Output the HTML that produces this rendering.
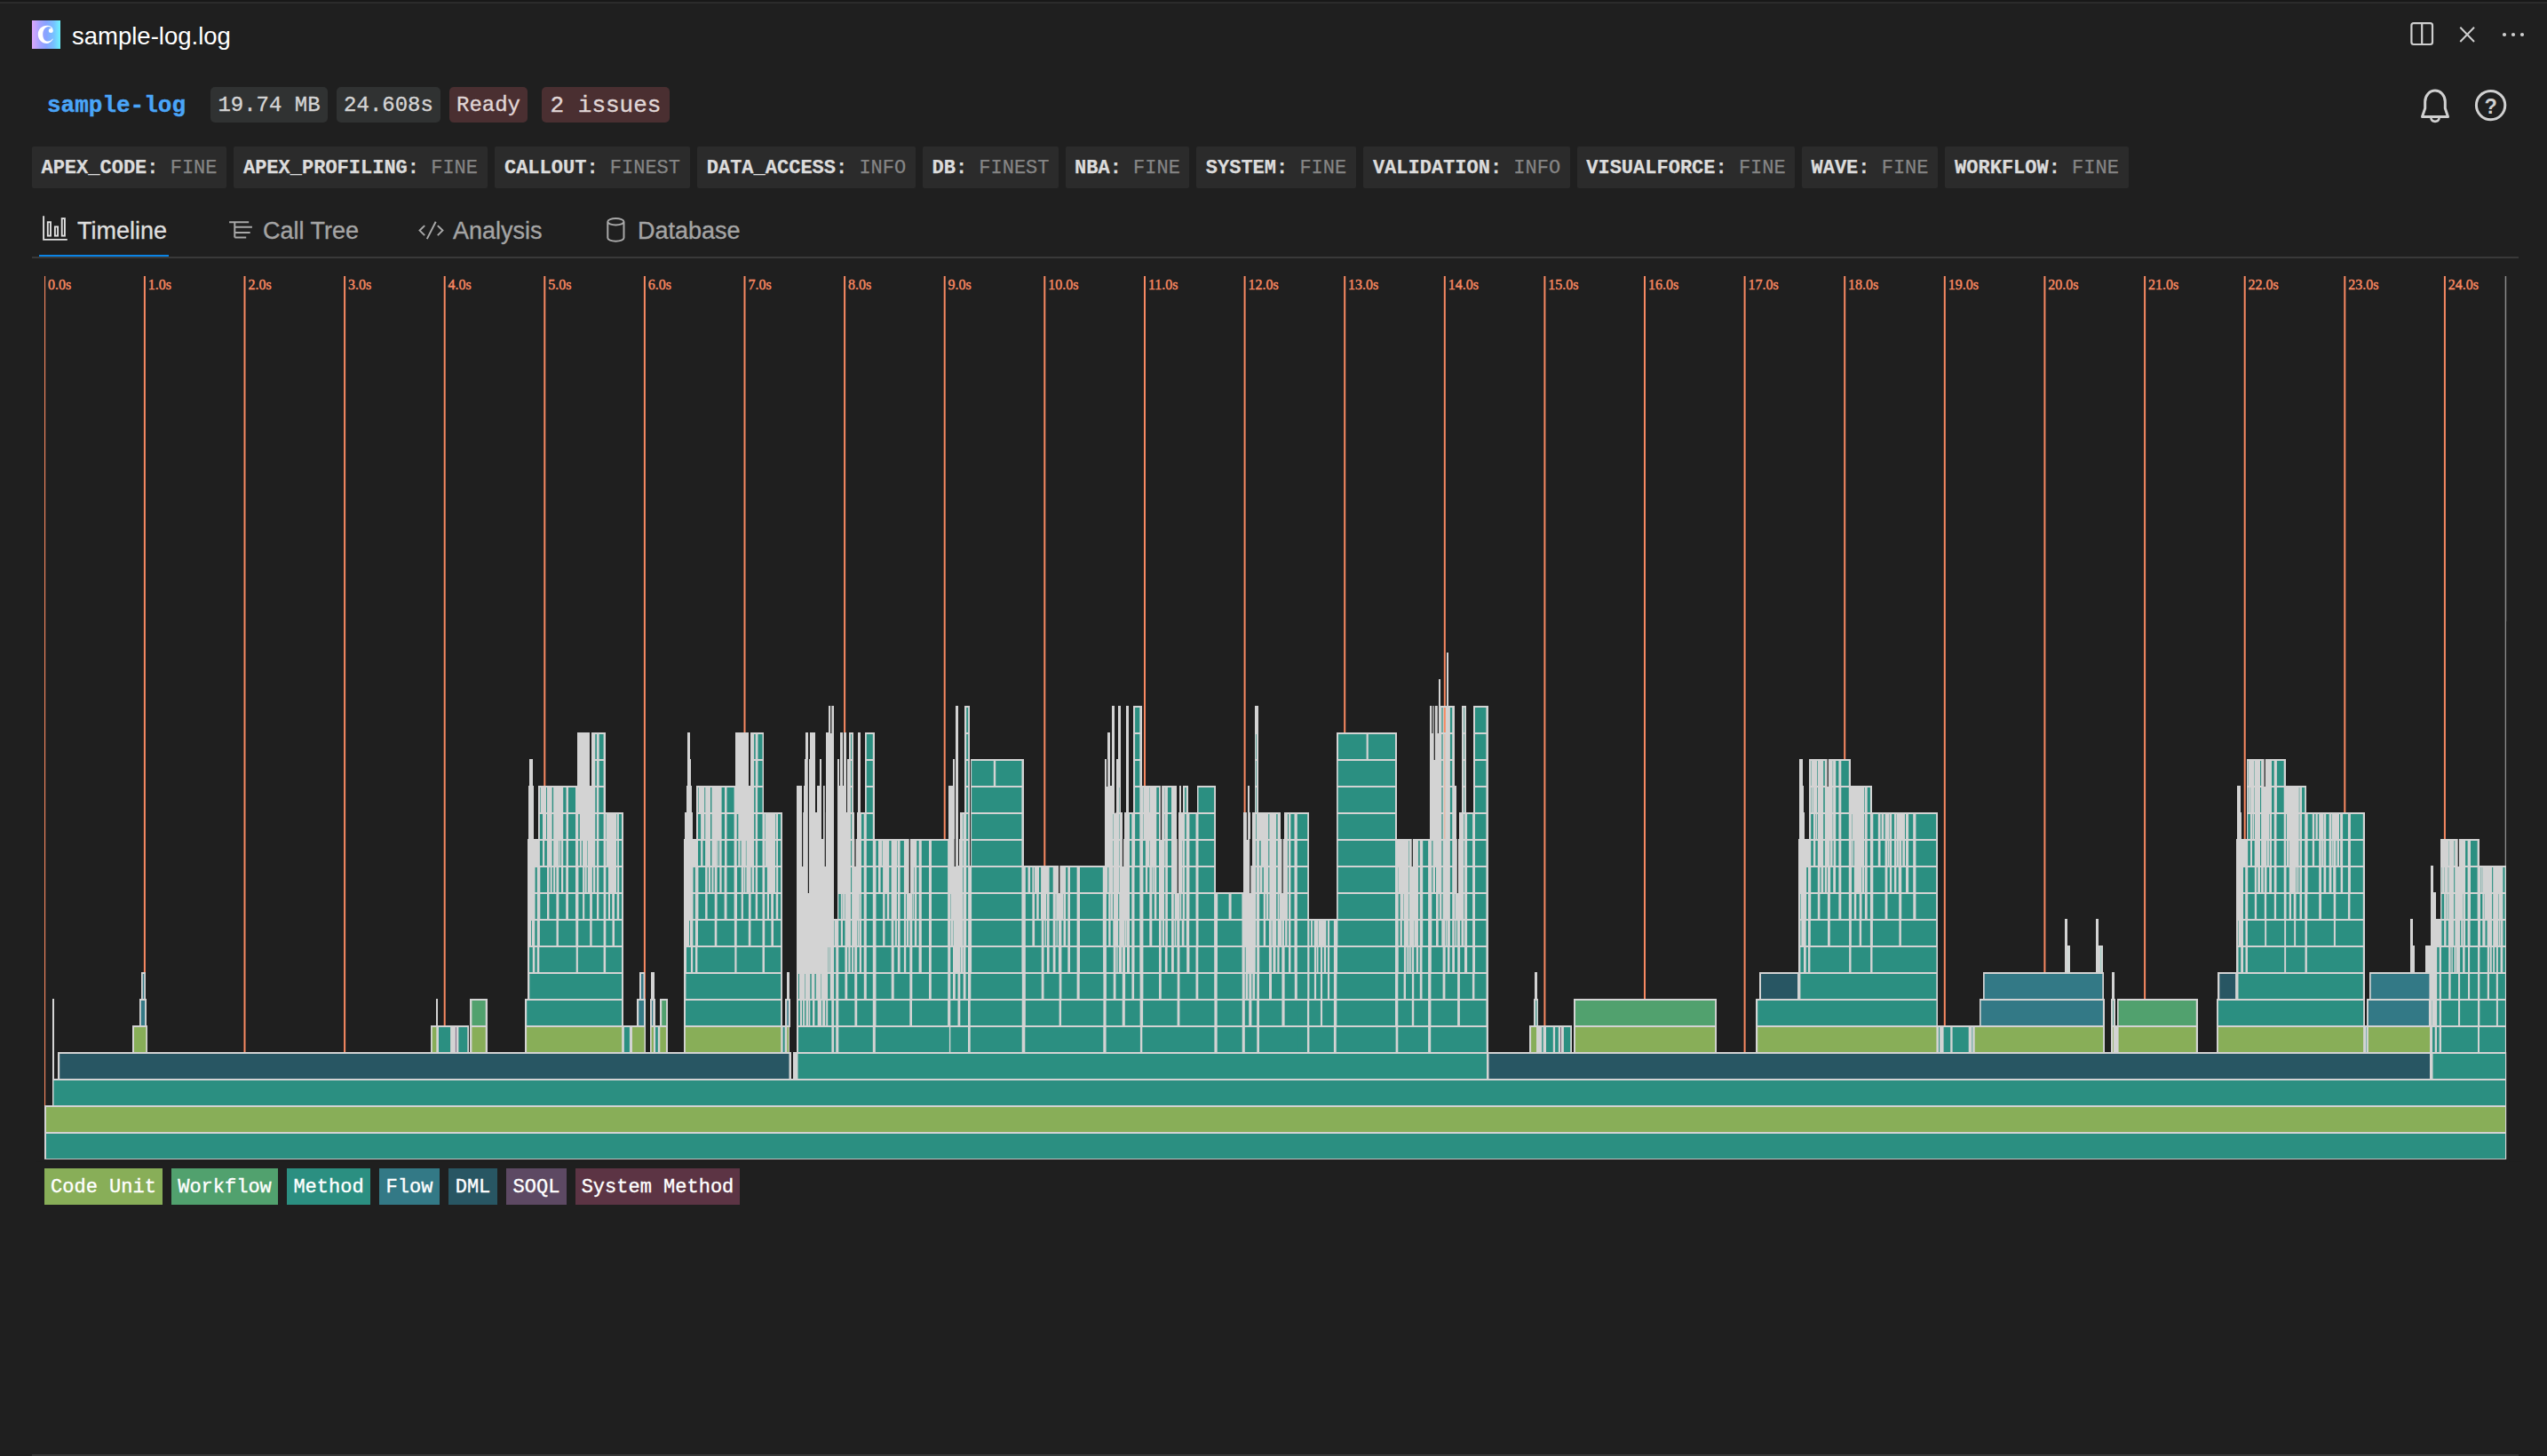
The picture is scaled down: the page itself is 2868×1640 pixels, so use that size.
<!DOCTYPE html>
<html><head><meta charset="utf-8"><title>sample-log.log</title>
<style>
*{box-sizing:border-box;margin:0;padding:0}
html,body{width:2868px;height:1640px;overflow:hidden;background:#1f1f1f}
body{position:relative;font-family:"Liberation Sans",sans-serif;color:#ccc}
.abs{position:absolute}
.mono{font-family:"Liberation Mono",monospace}
.topstrip{left:0;top:0;width:2868px;height:2px;background:#181818}
.topline{left:0;top:2px;width:2868px;height:2px;background:#2b2b2b}
.title{left:81px;top:22.5px;font-size:27.5px;line-height:36px;color:#fff;white-space:nowrap}
.logo{left:36px;top:23px;width:32px;height:32px;background:linear-gradient(90deg,#dca6fb 0%,#a9a2fe 25%,#86a2ff 50%,#76c4ff 78%,#6ef4ff 100%)}
.name{left:53px;top:101px;-webkit-text-stroke:0.4px;font-size:26px;line-height:36px;font-weight:bold;color:#4aa5f8;white-space:nowrap}
.badge{top:98px;height:40px;border-radius:5px;background:#303232;color:#d4d4d4;font-size:24px;line-height:42.500px;-webkit-text-stroke:0.35px;text-align:center;white-space:nowrap}
.badge.red{background:#4a2f31;color:#e0d6d6}
.chip{top:165px;height:47px;background:#2b2b2b;border-radius:2px;font-size:22px;line-height:49px;white-space:nowrap;text-align:center;color:#858585;-webkit-text-stroke:0.25px}
.chip b{color:#dcdcdc;font-weight:bold}
.tab{top:243.800px;-webkit-text-stroke:0.35px;font-size:27px;line-height:32px;color:#a4a4a4;white-space:nowrap}
.tab.on{color:#dedede}
.uline{left:44px;top:287px;width:146px;height:2px;background:#0a84e6}
.sep{left:36px;top:289px;width:2800px;height:2px;background:#393939}
.bot{left:36px;top:1638px;width:2800px;height:2px;background:#353535}
.leg{top:1316px;height:41px;font-size:22px;line-height:43px;color:#fff;text-align:center;white-space:nowrap;-webkit-text-stroke:0.35px}
svg{position:absolute;left:0;top:0}
</style></head><body>
<div class="abs topstrip"></div><div class="abs topline"></div>
<div class="abs logo"></div>
<svg width="2868" height="160" viewBox="0 0 2868 160">
<path d="M59.8 44.1C57.5 47.8 55 49 52.7 49C47 49 42.8 44.5 42.8 38.7C42.8 33 47 28.8 53 28.8C56 28.8 58.6 30.2 59.6 32.6L58.5 33C57.6 31 56.4 29.9 54.6 29.9C51 29.9 48.2 33.5 48.2 38.7C48.2 43.5 50.5 46.6 54 46.6C56 46.6 58 45.5 59.3 43.600Z" fill="#fff"/><circle cx="57.3" cy="34.6" r="2.5" fill="#fff"/>
<g fill="none" stroke="#cfcfcf" stroke-width="2.2">
<rect x="2715.4" y="26.2" width="23.6" height="23.8" rx="2.5"/><path d="M2727.2 26.2V50"/>
<path d="M2770.3 30.8L2786 47M2786 30.8L2770.3 47" stroke-width="2"/>
</g>
<g fill="#cfcfcf"><circle cx="2820" cy="39" r="2.1"/><circle cx="2830" cy="39" r="2.1"/><circle cx="2840" cy="39" r="2.1"/></g>
<g fill="none" stroke="#d0d0d0" stroke-width="3" stroke-linejoin="round">
<path d="M2727.5 131.5h29l-3.2-9.5v-7.5a11.3 12.5 0 0 0-22.6 0v7.500z"/>
<path d="M2737.3 133a4.8 4.8 0 0 0 9.4 0" stroke-width="2.6"/>
<circle cx="2804.6" cy="118.6" r="16.2"/>
</g>
<text x="2804.6" y="127.5" font-family="Liberation Sans" font-weight="bold" font-size="23.500" fill="#d0d0d0" text-anchor="middle">?</text>
</svg>
<div class="abs title">sample-log.log</div>
<div class="abs name mono">sample-log</div>
<div class="abs badge mono" style="left:237px;width:132px">19.74 MB</div>
<div class="abs badge mono" style="left:379px;width:117px">24.608s</div>
<div class="abs badge red mono" style="left:506px;width:88px">Ready</div>
<div class="abs badge red mono" style="left:610px;width:144px;font-size:26px;line-height:42px">2 issues</div>
<div class="abs chip mono" style="left:36px;width:219px"><b>APEX_CODE:</b> FINE</div>
<div class="abs chip mono" style="left:263px;width:286px"><b>APEX_PROFILING:</b> FINE</div>
<div class="abs chip mono" style="left:557px;width:220px"><b>CALLOUT:</b> FINEST</div>
<div class="abs chip mono" style="left:785px;width:246px"><b>DATA_ACCESS:</b> INFO</div>
<div class="abs chip mono" style="left:1039px;width:153px"><b>DB:</b> FINEST</div>
<div class="abs chip mono" style="left:1200px;width:139px"><b>NBA:</b> FINE</div>
<div class="abs chip mono" style="left:1347px;width:180px"><b>SYSTEM:</b> FINE</div>
<div class="abs chip mono" style="left:1535px;width:233px"><b>VALIDATION:</b> INFO</div>
<div class="abs chip mono" style="left:1776px;width:245px"><b>VISUALFORCE:</b> FINE</div>
<div class="abs chip mono" style="left:2029px;width:153px"><b>WAVE:</b> FINE</div>
<div class="abs chip mono" style="left:2190px;width:207px"><b>WORKFLOW:</b> FINE</div>
<div class="abs tab on" style="left:87px">Timeline</div>
<div class="abs tab" style="left:296px">Call Tree</div>
<div class="abs tab" style="left:510px">Analysis</div>
<div class="abs tab" style="left:718px">Database</div>
<svg width="800" height="300" viewBox="0 0 800 300">
<g fill="none" stroke="#e0e0e0" stroke-width="1.9">
<path d="M49.1 243.2V269.9H75.800"/>
<rect x="53.8" y="250.2" width="3.2" height="15.4"/><rect x="61.9" y="255.4" width="3.2" height="10.2"/><rect x="69.7" y="246.1" width="3.2" height="19.500"/>
</g>
<g fill="none" stroke="#a8a8a8" stroke-width="2">
<path d="M258.1 250.3H280.2M264.3 255.7H283.9M264.3 261.9H281.7M264.3 267.6H277.2M264.3 250.3V267.600"/>
<path d="M478.2 254.1L472.600 259.6L478.2 265.1M492.8 254.1L498.400 259.6L492.8 265.1M490.7 249.8L480.8 269.100"/>
<path d="M684.3 249.7V268a9.1 3.7 0 0 0 18.2 0V249.7a9.1 3.7 0 0 0 -18.2 0a9.1 3.7 0 0 0 18.2 0"/>
</g>
</svg>
<div class="abs uline"></div><div class="abs sep"></div><div class="abs bot"></div>
<svg width="2868" height="1640" viewBox="0 0 2868 1640">
<g fill="#f88962">
<rect x="50" y="311" width="1.100" height="995"/>
<rect x="161.9" y="311" width="2" height="995"/>
<rect x="274.5" y="311" width="2" height="995"/>
<rect x="387.1" y="311" width="2" height="995"/>
<rect x="499.7" y="311" width="2" height="995"/>
<rect x="612.3" y="311" width="2" height="995"/>
<rect x="724.9" y="311" width="2" height="995"/>
<rect x="837.5" y="311" width="2" height="995"/>
<rect x="950.1" y="311" width="2" height="995"/>
<rect x="1062.7" y="311" width="2" height="995"/>
<rect x="1175.3" y="311" width="2" height="995"/>
<rect x="1288" y="311" width="2" height="995"/>
<rect x="1400.6" y="311" width="2" height="995"/>
<rect x="1513.2" y="311" width="2" height="995"/>
<rect x="1625.8" y="311" width="2" height="995"/>
<rect x="1738.4" y="311" width="2" height="995"/>
<rect x="1851" y="311" width="2" height="995"/>
<rect x="1963.6" y="311" width="2" height="995"/>
<rect x="2076.2" y="311" width="2" height="995"/>
<rect x="2188.8" y="311" width="2" height="995"/>
<rect x="2301.4" y="311" width="2" height="995"/>
<rect x="2414.1" y="311" width="2" height="995"/>
<rect x="2526.7" y="311" width="2" height="995"/>
<rect x="2639.3" y="311" width="2" height="995"/>
<rect x="2751.9" y="311" width="2" height="995"/>
</g>
<g font-family="Liberation Serif" font-size="16" fill="#f88962" stroke="#f88962" stroke-width="0.45">
<text x="54.1" y="325.5">0.0s</text>
<text x="166.8" y="325.5">1.0s</text>
<text x="279.4" y="325.5">2.0s</text>
<text x="392" y="325.5">3.0s</text>
<text x="504.6" y="325.5">4.0s</text>
<text x="617.2" y="325.5">5.0s</text>
<text x="729.8" y="325.5">6.0s</text>
<text x="842.4" y="325.5">7.0s</text>
<text x="955" y="325.5">8.0s</text>
<text x="1067.6" y="325.5">9.0s</text>
<text x="1180.2" y="325.5">10.0s</text>
<text x="1292.9" y="325.5">11.0s</text>
<text x="1405.5" y="325.5">12.0s</text>
<text x="1518.1" y="325.5">13.0s</text>
<text x="1630.7" y="325.5">14.0s</text>
<text x="1743.3" y="325.5">15.0s</text>
<text x="1855.9" y="325.5">16.0s</text>
<text x="1968.5" y="325.5">17.0s</text>
<text x="2081.1" y="325.5">18.0s</text>
<text x="2193.7" y="325.5">19.0s</text>
<text x="2306.3" y="325.5">20.0s</text>
<text x="2419" y="325.5">21.0s</text>
<text x="2531.6" y="325.5">22.0s</text>
<text x="2644.2" y="325.5">23.0s</text>
<text x="2756.8" y="325.5">24.0s</text>
</g>
<rect x="2820.7" y="311" width="1.5" height="995" fill="#8a8a8a"/>
<g fill="#d3d3d3" shape-rendering="crispEdges">
<rect x="50" y="1275" width="2773" height="32"/>
<rect x="50" y="1245" width="2773" height="32"/>
<rect x="58.5" y="1215" width="2764.5" height="32"/>
<rect x="58.5" y="1125" width="2.5" height="92"/>
<rect x="65.2" y="1185" width="825.3" height="32"/>
<rect x="149" y="1155" width="17.3" height="32"/>
<rect x="156.8" y="1125" width="8.3" height="32"/>
<rect x="158.9" y="1095" width="5.2" height="32"/>
<rect x="485" y="1155" width="43.3" height="32"/>
<rect x="490.6" y="1125" width="2.8" height="32"/>
<rect x="529.4" y="1155" width="19.3" height="32"/>
<rect x="529.4" y="1125" width="19.3" height="32"/>
<rect x="591.1" y="1155" width="111" height="32"/>
<rect x="591.1" y="1125" width="111" height="32"/>
<rect x="594.3" y="945" width="107.8" height="182"/>
<rect x="605.8" y="915" width="96.3" height="32"/>
<rect x="605.8" y="885" width="75.7" height="32"/>
<rect x="649.7" y="825" width="14.2" height="62"/>
<rect x="665.8" y="825" width="15.7" height="62"/>
<rect x="663.9" y="885" width="1.9" height="32"/>
<rect x="594.9" y="885" width="6.2" height="62"/>
<rect x="596.1" y="855" width="3.7" height="32"/>
<rect x="769.9" y="1155" width="111.3" height="32"/>
<rect x="769.9" y="1125" width="111.3" height="32"/>
<rect x="770.4" y="945" width="110.8" height="182"/>
<rect x="783.9" y="915" width="97.3" height="32"/>
<rect x="783.9" y="885" width="76.5" height="32"/>
<rect x="828.2" y="825" width="14.4" height="62"/>
<rect x="844.5" y="825" width="15.9" height="62"/>
<rect x="842.6" y="885" width="1.9" height="32"/>
<rect x="772.9" y="885" width="6.2" height="62"/>
<rect x="774.1" y="855" width="3.7" height="32"/>
<rect x="770.5" y="945" width="10.5" height="152"/>
<rect x="701.8" y="1155" width="25.3" height="32"/>
<rect x="732" y="1155" width="19.5" height="32"/>
<rect x="717.3" y="1125" width="9.6" height="32"/>
<rect x="720.2" y="1095" width="6.1" height="32"/>
<rect x="731.9" y="1125" width="6.4" height="32"/>
<rect x="733.2" y="1095" width="3.7" height="32"/>
<rect x="743.1" y="1125" width="8.7" height="32"/>
<rect x="774.2" y="825" width="2.5" height="32"/>
<rect x="770.5" y="915" width="9.6" height="32"/>
<rect x="892.9" y="1185" width="6.1" height="32"/>
<rect x="880.1" y="1155" width="9.3" height="32"/>
<rect x="884" y="1125" width="5.9" height="32"/>
<rect x="885.7" y="1095" width="3.7" height="32"/>
<rect x="896.5" y="1185" width="779.5" height="32"/>
<rect x="896.8" y="945" width="41.9" height="242"/>
<rect x="896.8" y="915" width="28.3" height="272"/>
<rect x="927" y="915" width="11.6" height="272"/>
<rect x="897.1" y="885" width="6.2" height="302"/>
<rect x="905.1" y="885" width="1.1" height="302"/>
<rect x="906.2" y="855" width="3.5" height="332"/>
<rect x="907.1" y="825" width="2.6" height="362"/>
<rect x="911.2" y="855" width="0.8" height="332"/>
<rect x="911.9" y="825" width="5.6" height="362"/>
<rect x="920.2" y="885" width="2.3" height="302"/>
<rect x="922.5" y="855" width="2.6" height="332"/>
<rect x="927" y="885" width="2" height="302"/>
<rect x="930" y="825" width="8.6" height="362"/>
<rect x="933.1" y="795" width="5.6" height="392"/>
<rect x="938.8" y="1035" width="4.1" height="152"/>
<rect x="942.6" y="945" width="42.3" height="242"/>
<rect x="942.6" y="915" width="19.6" height="272"/>
<rect x="964.8" y="915" width="20.1" height="272"/>
<rect x="942.6" y="885" width="10.6" height="302"/>
<rect x="954.2" y="885" width="6.8" height="302"/>
<rect x="942.6" y="855" width="2.6" height="332"/>
<rect x="946.2" y="825" width="2.4" height="362"/>
<rect x="949.8" y="825" width="3.3" height="362"/>
<rect x="954.2" y="855" width="1.8" height="332"/>
<rect x="956" y="825" width="5" height="362"/>
<rect x="965.6" y="825" width="3.8" height="362"/>
<rect x="974.3" y="825" width="10.6" height="362"/>
<rect x="984.7" y="945" width="83.3" height="242"/>
<rect x="1067.6" y="975" width="25.4" height="212"/>
<rect x="1086.1" y="795" width="5.8" height="392"/>
<rect x="1092.5" y="855" width="60.1" height="332"/>
<rect x="1152.1" y="975" width="77.9" height="212"/>
<rect x="1067.8" y="945" width="10.9" height="242"/>
<rect x="1068.4" y="885" width="6.5" height="302"/>
<rect x="1072.7" y="855" width="2.3" height="332"/>
<rect x="1076" y="795" width="2.7" height="392"/>
<rect x="1080.2" y="945" width="6" height="242"/>
<rect x="1081" y="915" width="5.3" height="272"/>
<rect x="1227" y="975" width="17.9" height="212"/>
<rect x="1244.1" y="885" width="8.2" height="302"/>
<rect x="1244.1" y="855" width="2.1" height="332"/>
<rect x="1247.3" y="825" width="2.3" height="362"/>
<rect x="1251.7" y="795" width="3.4" height="392"/>
<rect x="1256.9" y="855" width="1.6" height="332"/>
<rect x="1258.6" y="795" width="3.4" height="392"/>
<rect x="1252.4" y="915" width="12" height="272"/>
<rect x="1264.1" y="945" width="2.5" height="242"/>
<rect x="1266.1" y="915" width="9.6" height="272"/>
<rect x="1267.9" y="795" width="3.3" height="392"/>
<rect x="1275.7" y="795" width="9.9" height="392"/>
<rect x="1285.4" y="885" width="39.7" height="302"/>
<rect x="1324.8" y="945" width="2.7" height="242"/>
<rect x="1327.3" y="915" width="20.6" height="272"/>
<rect x="1328" y="885" width="2.3" height="302"/>
<rect x="1332.1" y="885" width="5.9" height="302"/>
<rect x="1347.6" y="885" width="21.8" height="302"/>
<rect x="1369.2" y="1005" width="30.9" height="182"/>
<rect x="1399.8" y="915" width="7.8" height="272"/>
<rect x="1404.9" y="885" width="2.3" height="302"/>
<rect x="1407.4" y="975" width="2.6" height="212"/>
<rect x="1409.7" y="915" width="32.6" height="272"/>
<rect x="1412.7" y="795" width="4.5" height="392"/>
<rect x="1442" y="945" width="3.7" height="242"/>
<rect x="1445.5" y="915" width="28.3" height="272"/>
<rect x="1473.5" y="1035" width="26.5" height="152"/>
<rect x="1473.1" y="1035" width="32.3" height="152"/>
<rect x="1504.8" y="825" width="68.4" height="362"/>
<rect x="1571" y="945" width="39.7" height="242"/>
<rect x="1610.2" y="795" width="27.3" height="392"/>
<rect x="1620.1" y="765" width="2.1" height="422"/>
<rect x="1628.8" y="735" width="2.3" height="452"/>
<rect x="1637" y="885" width="3.3" height="302"/>
<rect x="1640" y="945" width="3" height="242"/>
<rect x="1642.8" y="915" width="16.8" height="272"/>
<rect x="1646.2" y="795" width="4.8" height="392"/>
<rect x="1659" y="795" width="16.6" height="392"/>
<rect x="1722.2" y="1155" width="48.1" height="32"/>
<rect x="1727.3" y="1125" width="4.8" height="32"/>
<rect x="1728" y="1095" width="3" height="32"/>
<rect x="1674.5" y="1185" width="1063.5" height="32"/>
<rect x="2737.5" y="1185" width="85.5" height="32"/>
<rect x="1772" y="1155" width="161.1" height="32"/>
<rect x="1772" y="1125" width="161.1" height="32"/>
<rect x="1977.2" y="1155" width="205.2" height="32"/>
<rect x="1977.2" y="1125" width="205.2" height="32"/>
<rect x="1981" y="1095" width="45" height="32"/>
<rect x="2025.2" y="945" width="157.2" height="182"/>
<rect x="2026" y="855" width="3.8" height="272"/>
<rect x="2026" y="885" width="4.7" height="242"/>
<rect x="2026" y="915" width="6" height="212"/>
<rect x="2037" y="855" width="47.4" height="272"/>
<rect x="2084.1" y="885" width="24" height="242"/>
<rect x="2107.9" y="915" width="74.5" height="212"/>
<rect x="2182.1" y="1155" width="41.8" height="32"/>
<rect x="2221.7" y="1155" width="148.4" height="32"/>
<rect x="2228.6" y="1125" width="141.3" height="32"/>
<rect x="2232.7" y="1095" width="136.6" height="32"/>
<rect x="2324.8" y="1065" width="6.2" height="32"/>
<rect x="2324.8" y="1035" width="3.4" height="32"/>
<rect x="2359.8" y="1065" width="8.1" height="32"/>
<rect x="2359.8" y="1035" width="3.3" height="32"/>
<rect x="2377.7" y="1095" width="3.4" height="32"/>
<rect x="2377.3" y="1125" width="4.8" height="32"/>
<rect x="2377.3" y="1155" width="6.9" height="32"/>
<rect x="2383.6" y="1155" width="91.2" height="32"/>
<rect x="2383.6" y="1125" width="91.2" height="32"/>
<rect x="2495.9" y="1155" width="167.2" height="32"/>
<rect x="2495.9" y="1125" width="167.2" height="32"/>
<rect x="2497.3" y="1095" width="21.8" height="32"/>
<rect x="2518.3" y="945" width="144.8" height="182"/>
<rect x="2519.1" y="885" width="3.4" height="242"/>
<rect x="2519.1" y="915" width="4.9" height="212"/>
<rect x="2529.6" y="855" width="44.2" height="272"/>
<rect x="2573.6" y="885" width="23.6" height="242"/>
<rect x="2596.9" y="915" width="66.2" height="212"/>
<rect x="2662.9" y="1155" width="4.4" height="32"/>
<rect x="2664.9" y="1155" width="73.1" height="32"/>
<rect x="2664.9" y="1125" width="72" height="32"/>
<rect x="2667.7" y="1095" width="69.7" height="32"/>
<rect x="2714.3" y="1035" width="2.5" height="32"/>
<rect x="2714.3" y="1065" width="4.9" height="32"/>
<rect x="2731.2" y="1065" width="6.2" height="122"/>
<rect x="2737.1" y="1035" width="85.1" height="152"/>
<rect x="2737.1" y="975" width="3.3" height="212"/>
<rect x="2737.1" y="1005" width="5.5" height="182"/>
<rect x="2748.1" y="945" width="44.2" height="242"/>
<rect x="2792" y="975" width="30.1" height="212"/>
<rect x="2736" y="1095" width="86.2" height="92"/>
</g>
<g fill="#2b8f81">
<rect x="52" y="1277" width="2769" height="28"/>
<rect x="60.5" y="1217" width="2760.5" height="28"/>
<rect x="494" y="1157" width="13.1" height="28"/>
<rect x="516.4" y="1157" width="9.9" height="28"/>
<rect x="593.2" y="1127" width="106.8" height="28"/>
<rect x="596.3" y="1097" width="103.7" height="28"/>
<rect x="596.1" y="1067" width="3.7" height="28"/>
<rect x="602.3" y="1067" width="2.5" height="28"/>
<rect x="607.3" y="1067" width="41.4" height="28"/>
<rect x="650.9" y="1067" width="28.7" height="28"/>
<rect x="682.1" y="1067" width="17.9" height="28"/>
<rect x="598" y="1037" width="0.9" height="28"/>
<rect x="602.3" y="1037" width="2.5" height="28"/>
<rect x="607.9" y="1037" width="18.6" height="28"/>
<rect x="628.9" y="1037" width="19.4" height="28"/>
<rect x="651.2" y="1037" width="13" height="28"/>
<rect x="666.6" y="1037" width="13" height="28"/>
<rect x="682.3" y="1037" width="7.2" height="28"/>
<rect x="692" y="1037" width="8" height="28"/>
<rect x="602.6" y="1007" width="2.2" height="28"/>
<rect x="608.3" y="1007" width="7.7" height="28"/>
<rect x="618.4" y="1007" width="8" height="28"/>
<rect x="629.3" y="1007" width="7.9" height="28"/>
<rect x="640" y="1007" width="8" height="28"/>
<rect x="651.4" y="1007" width="4.7" height="28"/>
<rect x="658.2" y="1007" width="5.9" height="28"/>
<rect x="666.9" y="1007" width="5.1" height="28"/>
<rect x="674.3" y="1007" width="5.3" height="28"/>
<rect x="682.3" y="1007" width="2.6" height="28"/>
<rect x="687" y="1007" width="2.2" height="28"/>
<rect x="692" y="1007" width="2.7" height="28"/>
<rect x="697.2" y="1007" width="2.8" height="28"/>
<rect x="602.6" y="977" width="2.2" height="28"/>
<rect x="608.3" y="977" width="7.7" height="28"/>
<rect x="618.4" y="977" width="1.2" height="28"/>
<rect x="621.7" y="977" width="1.4" height="28"/>
<rect x="625.2" y="977" width="1.2" height="28"/>
<rect x="629.3" y="977" width="2.7" height="28"/>
<rect x="634.2" y="977" width="3" height="28"/>
<rect x="640" y="977" width="8" height="28"/>
<rect x="651.4" y="977" width="4.7" height="28"/>
<rect x="658.3" y="977" width="0.5" height="28"/>
<rect x="660.7" y="977" width="1" height="28"/>
<rect x="666.9" y="977" width="1" height="28"/>
<rect x="670.3" y="977" width="1.6" height="28"/>
<rect x="674.3" y="977" width="5.3" height="28"/>
<rect x="682.3" y="977" width="2.6" height="28"/>
<rect x="694.1" y="977" width="1" height="28"/>
<rect x="697.2" y="977" width="2.8" height="28"/>
<rect x="607.9" y="947" width="3.1" height="28"/>
<rect x="613.2" y="947" width="2.7" height="28"/>
<rect x="621.7" y="947" width="1.4" height="28"/>
<rect x="629.4" y="947" width="0.5" height="28"/>
<rect x="631" y="947" width="0.7" height="28"/>
<rect x="634.2" y="947" width="3.3" height="28"/>
<rect x="640" y="947" width="8" height="28"/>
<rect x="651.2" y="947" width="1.6" height="28"/>
<rect x="654.9" y="947" width="1" height="28"/>
<rect x="661.2" y="947" width="0.5" height="28"/>
<rect x="670.3" y="947" width="1.6" height="28"/>
<rect x="674.3" y="947" width="5.3" height="28"/>
<rect x="682.2" y="947" width="0.5" height="28"/>
<rect x="694.1" y="947" width="1" height="28"/>
<rect x="696.9" y="947" width="3.1" height="28"/>
<rect x="607.9" y="917" width="3.1" height="28"/>
<rect x="615.1" y="917" width="0.9" height="28"/>
<rect x="621.7" y="917" width="1.4" height="28"/>
<rect x="634.2" y="917" width="3.3" height="28"/>
<rect x="640" y="917" width="8" height="28"/>
<rect x="651.2" y="917" width="1.6" height="28"/>
<rect x="670.3" y="917" width="1.6" height="28"/>
<rect x="674.3" y="917" width="5.3" height="28"/>
<rect x="682.2" y="917" width="0.5" height="28"/>
<rect x="694.2" y="917" width="0.6" height="28"/>
<rect x="696.9" y="917" width="3.1" height="28"/>
<rect x="608.3" y="887" width="0.6" height="28"/>
<rect x="615.1" y="887" width="0.9" height="28"/>
<rect x="621.7" y="887" width="1.4" height="28"/>
<rect x="634.2" y="887" width="3.3" height="28"/>
<rect x="640" y="887" width="8" height="28"/>
<rect x="670.3" y="887" width="1.6" height="28"/>
<rect x="674.3" y="887" width="5.3" height="28"/>
<rect x="670.3" y="857" width="1.6" height="28"/>
<rect x="670.3" y="827" width="1.6" height="28"/>
<rect x="674.7" y="857" width="4.9" height="28"/>
<rect x="674.7" y="827" width="4.9" height="28"/>
<rect x="772" y="1127" width="107.1" height="28"/>
<rect x="772.4" y="1097" width="106.7" height="28"/>
<rect x="774.1" y="1067" width="3.7" height="28"/>
<rect x="780.4" y="1067" width="2.5" height="28"/>
<rect x="785.4" y="1067" width="41.9" height="28"/>
<rect x="829.5" y="1067" width="29" height="28"/>
<rect x="861" y="1067" width="18.1" height="28"/>
<rect x="776" y="1037" width="0.9" height="28"/>
<rect x="780.4" y="1037" width="2.5" height="28"/>
<rect x="786" y="1037" width="18.7" height="28"/>
<rect x="807.3" y="1037" width="19.6" height="28"/>
<rect x="829.7" y="1037" width="13.1" height="28"/>
<rect x="845.4" y="1037" width="13.1" height="28"/>
<rect x="861.2" y="1037" width="7.2" height="28"/>
<rect x="871" y="1037" width="8.1" height="28"/>
<rect x="780.6" y="1007" width="2.2" height="28"/>
<rect x="786.4" y="1007" width="7.7" height="28"/>
<rect x="796.6" y="1007" width="8.1" height="28"/>
<rect x="807.6" y="1007" width="8" height="28"/>
<rect x="818.5" y="1007" width="8.1" height="28"/>
<rect x="830" y="1007" width="4.7" height="28"/>
<rect x="836.9" y="1007" width="6" height="28"/>
<rect x="845.6" y="1007" width="5.1" height="28"/>
<rect x="853.1" y="1007" width="5.4" height="28"/>
<rect x="861.2" y="1007" width="2.6" height="28"/>
<rect x="866" y="1007" width="2.2" height="28"/>
<rect x="871" y="1007" width="2.7" height="28"/>
<rect x="876.2" y="1007" width="2.9" height="28"/>
<rect x="780.6" y="977" width="2.2" height="28"/>
<rect x="786.4" y="977" width="7.7" height="28"/>
<rect x="796.6" y="977" width="1.2" height="28"/>
<rect x="800" y="977" width="1.4" height="28"/>
<rect x="803.5" y="977" width="1.2" height="28"/>
<rect x="807.6" y="977" width="2.7" height="28"/>
<rect x="812.6" y="977" width="3" height="28"/>
<rect x="818.5" y="977" width="8.1" height="28"/>
<rect x="830" y="977" width="4.7" height="28"/>
<rect x="837" y="977" width="0.5" height="28"/>
<rect x="839.4" y="977" width="1" height="28"/>
<rect x="845.6" y="977" width="1" height="28"/>
<rect x="849.1" y="977" width="1.6" height="28"/>
<rect x="853.1" y="977" width="5.4" height="28"/>
<rect x="861.2" y="977" width="2.6" height="28"/>
<rect x="873.1" y="977" width="1" height="28"/>
<rect x="876.2" y="977" width="2.9" height="28"/>
<rect x="786" y="947" width="3.1" height="28"/>
<rect x="791.4" y="947" width="2.7" height="28"/>
<rect x="800" y="947" width="1.4" height="28"/>
<rect x="807.8" y="947" width="0.5" height="28"/>
<rect x="809.4" y="947" width="0.7" height="28"/>
<rect x="812.6" y="947" width="3.4" height="28"/>
<rect x="818.5" y="947" width="8.1" height="28"/>
<rect x="829.7" y="947" width="1.6" height="28"/>
<rect x="833.5" y="947" width="1" height="28"/>
<rect x="839.9" y="947" width="0.5" height="28"/>
<rect x="849.1" y="947" width="1.6" height="28"/>
<rect x="853.1" y="947" width="5.4" height="28"/>
<rect x="861.1" y="947" width="0.5" height="28"/>
<rect x="873.1" y="947" width="1" height="28"/>
<rect x="876" y="947" width="3.1" height="28"/>
<rect x="786" y="917" width="3.1" height="28"/>
<rect x="793.3" y="917" width="0.9" height="28"/>
<rect x="800" y="917" width="1.4" height="28"/>
<rect x="812.6" y="917" width="3.4" height="28"/>
<rect x="818.5" y="917" width="8.1" height="28"/>
<rect x="829.7" y="917" width="1.6" height="28"/>
<rect x="849.1" y="917" width="1.6" height="28"/>
<rect x="853.1" y="917" width="5.4" height="28"/>
<rect x="861.1" y="917" width="0.5" height="28"/>
<rect x="873.2" y="917" width="0.6" height="28"/>
<rect x="876" y="917" width="3.1" height="28"/>
<rect x="786.4" y="887" width="0.6" height="28"/>
<rect x="793.3" y="887" width="0.9" height="28"/>
<rect x="800" y="887" width="1.4" height="28"/>
<rect x="812.6" y="887" width="3.4" height="28"/>
<rect x="818.5" y="887" width="8.1" height="28"/>
<rect x="849.1" y="887" width="1.6" height="28"/>
<rect x="853.1" y="887" width="5.4" height="28"/>
<rect x="849.1" y="857" width="1.6" height="28"/>
<rect x="849.1" y="827" width="1.6" height="28"/>
<rect x="853.5" y="857" width="5" height="28"/>
<rect x="853.5" y="827" width="5" height="28"/>
<rect x="773" y="1067" width="4.7" height="28"/>
<rect x="780.4" y="1067" width="2.5" height="28"/>
<rect x="702.9" y="1157" width="6" height="28"/>
<rect x="738.1" y="1157" width="2.7" height="28"/>
<rect x="881.6" y="1157" width="2" height="28"/>
<rect x="898.5" y="1187" width="775.5" height="28"/>
<rect x="1084.5" y="977" width="0.5" height="28"/>
<rect x="1084.5" y="947" width="0.5" height="28"/>
<rect x="1084.5" y="917" width="0.5" height="28"/>
<rect x="958.1" y="1097" width="1" height="28"/>
<rect x="958.1" y="1067" width="1" height="28"/>
<rect x="958.1" y="1037" width="1" height="28"/>
<rect x="958.1" y="1007" width="1" height="28"/>
<rect x="958.1" y="977" width="1" height="28"/>
<rect x="958.1" y="947" width="1" height="28"/>
<rect x="958.1" y="917" width="1" height="28"/>
<rect x="958.1" y="887" width="1" height="28"/>
<rect x="958.1" y="857" width="1" height="28"/>
<rect x="958.1" y="827" width="1" height="28"/>
<rect x="970" y="1067" width="2.7" height="28"/>
<rect x="970" y="1037" width="2.7" height="28"/>
<rect x="970" y="1007" width="2.7" height="28"/>
<rect x="970" y="977" width="2.7" height="28"/>
<rect x="970" y="947" width="2.7" height="28"/>
<rect x="970" y="917" width="2.7" height="28"/>
<rect x="975.8" y="1097" width="7" height="28"/>
<rect x="975.8" y="1067" width="7" height="28"/>
<rect x="975.8" y="1037" width="7" height="28"/>
<rect x="975.8" y="1007" width="7" height="28"/>
<rect x="975.8" y="977" width="7" height="28"/>
<rect x="975.8" y="947" width="7" height="28"/>
<rect x="975.8" y="917" width="7" height="28"/>
<rect x="975.8" y="887" width="7" height="28"/>
<rect x="975.8" y="857" width="7" height="28"/>
<rect x="975.8" y="827" width="7" height="28"/>
<rect x="1088.2" y="1037" width="1.9" height="28"/>
<rect x="1088.2" y="1007" width="1.9" height="28"/>
<rect x="1088.2" y="977" width="1.9" height="28"/>
<rect x="1088.2" y="947" width="1.9" height="28"/>
<rect x="1088.2" y="917" width="1.9" height="28"/>
<rect x="1088.2" y="887" width="1.9" height="28"/>
<rect x="1088.2" y="857" width="1.9" height="28"/>
<rect x="1088.2" y="827" width="1.9" height="28"/>
<rect x="1088.2" y="797" width="1.9" height="28"/>
<rect x="1094.1" y="1097" width="56.3" height="28"/>
<rect x="1094.1" y="1067" width="56.3" height="28"/>
<rect x="1094.1" y="1037" width="56.3" height="28"/>
<rect x="1094.1" y="1007" width="56.3" height="28"/>
<rect x="1094.1" y="977" width="56.3" height="28"/>
<rect x="1094.1" y="947" width="56.3" height="28"/>
<rect x="1094.1" y="917" width="56.3" height="28"/>
<rect x="1094.1" y="887" width="56.3" height="28"/>
<rect x="1094.1" y="857" width="24.7" height="28"/>
<rect x="1121.2" y="857" width="29.3" height="28"/>
<rect x="986.3" y="947" width="0.4" height="28"/>
<rect x="986.5" y="947" width="2.5" height="28"/>
<rect x="993.5" y="947" width="0.5" height="28"/>
<rect x="1001.3" y="947" width="2.3" height="28"/>
<rect x="1010" y="947" width="0.5" height="28"/>
<rect x="1013.6" y="947" width="4.3" height="28"/>
<rect x="1032.3" y="947" width="2.3" height="28"/>
<rect x="1037.8" y="947" width="8.2" height="28"/>
<rect x="1049" y="947" width="18.1" height="28"/>
<rect x="986.5" y="977" width="2.5" height="28"/>
<rect x="991.6" y="977" width="2.5" height="28"/>
<rect x="1001.3" y="977" width="2.3" height="28"/>
<rect x="1009.9" y="977" width="1" height="28"/>
<rect x="1013.6" y="977" width="4.3" height="28"/>
<rect x="1029.4" y="977" width="0.5" height="28"/>
<rect x="1032.3" y="977" width="2.3" height="28"/>
<rect x="1037.8" y="977" width="8.2" height="28"/>
<rect x="1049" y="977" width="18.1" height="28"/>
<rect x="1084.5" y="977" width="0.4" height="28"/>
<rect x="1154.8" y="977" width="2.7" height="28"/>
<rect x="1160.1" y="977" width="2.3" height="28"/>
<rect x="1164.3" y="977" width="0.7" height="28"/>
<rect x="1170" y="977" width="2.1" height="28"/>
<rect x="1181.6" y="977" width="4.1" height="28"/>
<rect x="1200.2" y="977" width="2.1" height="28"/>
<rect x="1205" y="977" width="7.6" height="28"/>
<rect x="1216" y="977" width="14" height="28"/>
<rect x="944.3" y="1007" width="2.5" height="28"/>
<rect x="948.7" y="1007" width="0.4" height="28"/>
<rect x="951" y="1007" width="0.4" height="28"/>
<rect x="967.9" y="1007" width="0.4" height="28"/>
<rect x="986.5" y="1007" width="7.6" height="28"/>
<rect x="996.5" y="1007" width="2.3" height="28"/>
<rect x="1001.3" y="1007" width="2.3" height="28"/>
<rect x="1009.9" y="1007" width="1" height="28"/>
<rect x="1013.6" y="1007" width="4.3" height="28"/>
<rect x="1020.2" y="1007" width="0.8" height="28"/>
<rect x="1027.6" y="1007" width="0.5" height="28"/>
<rect x="1029.2" y="1007" width="0.7" height="28"/>
<rect x="1032.3" y="1007" width="2.3" height="28"/>
<rect x="1037.8" y="1007" width="8.2" height="28"/>
<rect x="1049" y="1007" width="18.1" height="28"/>
<rect x="1070.5" y="1007" width="0.4" height="28"/>
<rect x="1084.5" y="1007" width="0.4" height="28"/>
<rect x="1154.8" y="1007" width="7.6" height="28"/>
<rect x="1165.1" y="1007" width="2.1" height="28"/>
<rect x="1169.7" y="1007" width="2.3" height="28"/>
<rect x="1178.1" y="1007" width="0.7" height="28"/>
<rect x="1181.6" y="1007" width="4.1" height="28"/>
<rect x="1188.8" y="1007" width="0.4" height="28"/>
<rect x="1197" y="1007" width="0.4" height="28"/>
<rect x="1200.2" y="1007" width="2.1" height="28"/>
<rect x="1205" y="1007" width="7.6" height="28"/>
<rect x="1216" y="1007" width="14" height="28"/>
<rect x="939.2" y="1037" width="0.5" height="28"/>
<rect x="944.3" y="1037" width="2.5" height="28"/>
<rect x="949" y="1037" width="2.5" height="28"/>
<rect x="965.3" y="1037" width="0.5" height="28"/>
<rect x="967.1" y="1037" width="0.4" height="28"/>
<rect x="986.5" y="1037" width="7.6" height="28"/>
<rect x="996.5" y="1037" width="7.1" height="28"/>
<rect x="1006.4" y="1037" width="1.4" height="28"/>
<rect x="1009.9" y="1037" width="1" height="28"/>
<rect x="1013.6" y="1037" width="4.3" height="28"/>
<rect x="1020.2" y="1037" width="0.8" height="28"/>
<rect x="1023.2" y="1037" width="1.1" height="28"/>
<rect x="1027.3" y="1037" width="2.5" height="28"/>
<rect x="1032.3" y="1037" width="2.3" height="28"/>
<rect x="1037.8" y="1037" width="8.2" height="28"/>
<rect x="1049" y="1037" width="18.1" height="28"/>
<rect x="1070.5" y="1037" width="0.4" height="28"/>
<rect x="1073.2" y="1037" width="0.4" height="28"/>
<rect x="1084.5" y="1037" width="0.4" height="28"/>
<rect x="1154.8" y="1037" width="7.6" height="28"/>
<rect x="1165.1" y="1037" width="7.6" height="28"/>
<rect x="1175.5" y="1037" width="1.1" height="28"/>
<rect x="1177.9" y="1037" width="1" height="28"/>
<rect x="1181.6" y="1037" width="4.1" height="28"/>
<rect x="1188.5" y="1037" width="1" height="28"/>
<rect x="1190.8" y="1037" width="1.1" height="28"/>
<rect x="1195.4" y="1037" width="2.1" height="28"/>
<rect x="1200.2" y="1037" width="2.1" height="28"/>
<rect x="1205" y="1037" width="7.6" height="28"/>
<rect x="1216" y="1037" width="14" height="28"/>
<rect x="932.5" y="1067" width="0.4" height="28"/>
<rect x="934.4" y="1067" width="0.4" height="28"/>
<rect x="939.1" y="1067" width="2.1" height="28"/>
<rect x="944.3" y="1067" width="7.1" height="28"/>
<rect x="954.2" y="1067" width="1.1" height="28"/>
<rect x="957.6" y="1067" width="1.4" height="28"/>
<rect x="961.1" y="1067" width="1.1" height="28"/>
<rect x="965.2" y="1067" width="2.5" height="28"/>
<rect x="986.5" y="1067" width="17.2" height="28"/>
<rect x="1006.7" y="1067" width="4.1" height="28"/>
<rect x="1013.6" y="1067" width="4.3" height="28"/>
<rect x="1020.2" y="1067" width="4.1" height="28"/>
<rect x="1027.3" y="1067" width="7.3" height="28"/>
<rect x="1037.8" y="1067" width="8.2" height="28"/>
<rect x="1048.8" y="1067" width="18.4" height="28"/>
<rect x="1070.3" y="1067" width="2.7" height="28"/>
<rect x="1081.5" y="1067" width="0.4" height="28"/>
<rect x="1084.5" y="1067" width="0.4" height="28"/>
<rect x="1087.5" y="1067" width="2.5" height="28"/>
<rect x="1154.8" y="1067" width="17.9" height="28"/>
<rect x="1175.5" y="1067" width="3.4" height="28"/>
<rect x="1181.6" y="1067" width="4.1" height="28"/>
<rect x="1188.5" y="1067" width="3.4" height="28"/>
<rect x="1195.4" y="1067" width="6.9" height="28"/>
<rect x="1205" y="1067" width="7.6" height="28"/>
<rect x="1216" y="1067" width="14" height="28"/>
<rect x="899" y="1097" width="1" height="28"/>
<rect x="906.2" y="1097" width="0.5" height="28"/>
<rect x="912.3" y="1097" width="1.4" height="28"/>
<rect x="917.4" y="1097" width="1.4" height="28"/>
<rect x="924.4" y="1097" width="0.4" height="28"/>
<rect x="932.2" y="1097" width="2.5" height="28"/>
<rect x="939.1" y="1097" width="2.1" height="28"/>
<rect x="944.3" y="1097" width="7.1" height="28"/>
<rect x="954.2" y="1097" width="8" height="28"/>
<rect x="965.2" y="1097" width="7.6" height="28"/>
<rect x="986.5" y="1097" width="17.2" height="28"/>
<rect x="1006.7" y="1097" width="17.6" height="28"/>
<rect x="1027.3" y="1097" width="18.7" height="28"/>
<rect x="1048.8" y="1097" width="18.4" height="28"/>
<rect x="1070.3" y="1097" width="2.7" height="28"/>
<rect x="1075.8" y="1097" width="2.7" height="28"/>
<rect x="1081.3" y="1097" width="3.4" height="28"/>
<rect x="1087.5" y="1097" width="2.5" height="28"/>
<rect x="1154.8" y="1097" width="17.9" height="28"/>
<rect x="1175.5" y="1097" width="17.2" height="28"/>
<rect x="1195.4" y="1097" width="17.2" height="28"/>
<rect x="1216" y="1097" width="14" height="28"/>
<rect x="1093.3" y="1097" width="57.4" height="28"/>
<rect x="899" y="1127" width="1.9" height="28"/>
<rect x="903.1" y="1127" width="1" height="28"/>
<rect x="906.1" y="1127" width="1.4" height="28"/>
<rect x="910.1" y="1127" width="0.5" height="28"/>
<rect x="912.3" y="1127" width="2.7" height="28"/>
<rect x="917.4" y="1127" width="3.2" height="28"/>
<rect x="925.1" y="1127" width="1" height="28"/>
<rect x="929.2" y="1127" width="1" height="28"/>
<rect x="932.2" y="1127" width="4.1" height="28"/>
<rect x="939.1" y="1127" width="2.1" height="28"/>
<rect x="944.3" y="1127" width="18.1" height="28"/>
<rect x="965.2" y="1127" width="17.6" height="28"/>
<rect x="986.5" y="1127" width="37.8" height="28"/>
<rect x="1027" y="1127" width="40.1" height="28"/>
<rect x="1070.3" y="1127" width="8.2" height="28"/>
<rect x="1081.3" y="1127" width="8.7" height="28"/>
<rect x="1092.7" y="1127" width="58" height="28"/>
<rect x="1154.8" y="1127" width="37.8" height="28"/>
<rect x="1195.4" y="1127" width="34.6" height="28"/>
<rect x="899" y="1157" width="37.4" height="28"/>
<rect x="939.1" y="1157" width="2.1" height="28"/>
<rect x="944.3" y="1157" width="38.5" height="28"/>
<rect x="985.8" y="1157" width="83.1" height="28"/>
<rect x="1070.3" y="1157" width="19.7" height="28"/>
<rect x="1092.7" y="1157" width="58" height="28"/>
<rect x="1154.8" y="1157" width="75.2" height="28"/>
<rect x="1278.1" y="947" width="5.2" height="28"/>
<rect x="1278.1" y="917" width="5.2" height="28"/>
<rect x="1278.1" y="887" width="5.2" height="28"/>
<rect x="1278.1" y="857" width="5.2" height="28"/>
<rect x="1278.1" y="827" width="5.2" height="28"/>
<rect x="1278.1" y="797" width="5.2" height="28"/>
<rect x="1302.3" y="1007" width="2.7" height="28"/>
<rect x="1302.3" y="977" width="2.7" height="28"/>
<rect x="1302.3" y="947" width="2.7" height="28"/>
<rect x="1302.3" y="917" width="2.7" height="28"/>
<rect x="1302.3" y="887" width="2.7" height="28"/>
<rect x="1314.9" y="1037" width="4.1" height="28"/>
<rect x="1314.9" y="1007" width="4.1" height="28"/>
<rect x="1314.9" y="977" width="4.1" height="28"/>
<rect x="1314.9" y="947" width="4.1" height="28"/>
<rect x="1314.9" y="917" width="4.1" height="28"/>
<rect x="1314.9" y="887" width="4.1" height="28"/>
<rect x="1334.1" y="1007" width="1.6" height="28"/>
<rect x="1334.1" y="977" width="1.6" height="28"/>
<rect x="1334.1" y="947" width="1.6" height="28"/>
<rect x="1334.1" y="917" width="1.6" height="28"/>
<rect x="1334.1" y="887" width="1.6" height="28"/>
<rect x="1339.4" y="1067" width="7.1" height="28"/>
<rect x="1339.4" y="1037" width="7.1" height="28"/>
<rect x="1339.4" y="1007" width="7.1" height="28"/>
<rect x="1339.4" y="977" width="7.1" height="28"/>
<rect x="1339.4" y="947" width="7.1" height="28"/>
<rect x="1339.4" y="917" width="7.1" height="28"/>
<rect x="1349.5" y="1037" width="17.6" height="28"/>
<rect x="1349.5" y="1007" width="17.6" height="28"/>
<rect x="1349.5" y="977" width="17.6" height="28"/>
<rect x="1349.5" y="947" width="17.6" height="28"/>
<rect x="1349.5" y="917" width="17.6" height="28"/>
<rect x="1349.5" y="887" width="17.6" height="28"/>
<rect x="1272" y="1067" width="2.3" height="28"/>
<rect x="1272" y="1037" width="2.3" height="28"/>
<rect x="1272" y="1007" width="2.3" height="28"/>
<rect x="1272" y="977" width="2.3" height="28"/>
<rect x="1272" y="947" width="2.3" height="28"/>
<rect x="1272" y="917" width="2.3" height="28"/>
<rect x="1414.3" y="1037" width="0.7" height="28"/>
<rect x="1414.3" y="1007" width="0.7" height="28"/>
<rect x="1414.3" y="977" width="0.7" height="28"/>
<rect x="1414.3" y="947" width="0.7" height="28"/>
<rect x="1414.3" y="917" width="0.7" height="28"/>
<rect x="1414.3" y="887" width="0.7" height="28"/>
<rect x="1414.3" y="857" width="0.7" height="28"/>
<rect x="1414.3" y="827" width="0.7" height="28"/>
<rect x="1428.3" y="1007" width="1" height="28"/>
<rect x="1428.3" y="977" width="1" height="28"/>
<rect x="1428.3" y="947" width="1" height="28"/>
<rect x="1428.3" y="917" width="1" height="28"/>
<rect x="1437.2" y="1037" width="1.4" height="28"/>
<rect x="1437.2" y="1007" width="1.4" height="28"/>
<rect x="1437.2" y="977" width="1.4" height="28"/>
<rect x="1437.2" y="947" width="1.4" height="28"/>
<rect x="1437.2" y="917" width="1.4" height="28"/>
<rect x="1450" y="1037" width="1" height="28"/>
<rect x="1450" y="1007" width="1" height="28"/>
<rect x="1450" y="977" width="1" height="28"/>
<rect x="1450" y="947" width="1" height="28"/>
<rect x="1450" y="917" width="1" height="28"/>
<rect x="1453.4" y="1097" width="4.1" height="28"/>
<rect x="1453.4" y="1067" width="4.1" height="28"/>
<rect x="1453.4" y="1037" width="4.1" height="28"/>
<rect x="1453.4" y="1007" width="4.1" height="28"/>
<rect x="1453.4" y="977" width="4.1" height="28"/>
<rect x="1453.4" y="947" width="4.1" height="28"/>
<rect x="1453.4" y="917" width="4.1" height="28"/>
<rect x="1460.8" y="1097" width="11.4" height="28"/>
<rect x="1460.8" y="1067" width="11.4" height="28"/>
<rect x="1460.8" y="1037" width="11.4" height="28"/>
<rect x="1460.8" y="1007" width="11.4" height="28"/>
<rect x="1460.8" y="977" width="11.4" height="28"/>
<rect x="1460.8" y="947" width="11.4" height="28"/>
<rect x="1460.8" y="917" width="11.4" height="28"/>
<rect x="1253.2" y="917" width="0.4" height="28"/>
<rect x="1260.5" y="917" width="0.4" height="28"/>
<rect x="1287.6" y="917" width="0.4" height="28"/>
<rect x="1311.6" y="917" width="0.4" height="28"/>
<rect x="1260.5" y="887" width="0.4" height="28"/>
<rect x="1287.6" y="887" width="0.3" height="28"/>
<rect x="1294.4" y="887" width="0.3" height="28"/>
<rect x="1311.6" y="887" width="0.3" height="28"/>
<rect x="1253.2" y="947" width="0.5" height="28"/>
<rect x="1260.5" y="947" width="0.4" height="28"/>
<rect x="1287.1" y="947" width="2.7" height="28"/>
<rect x="1294.4" y="947" width="0.4" height="28"/>
<rect x="1311.6" y="947" width="0.5" height="28"/>
<rect x="1331.5" y="947" width="0.4" height="28"/>
<rect x="1418.2" y="947" width="1.4" height="28"/>
<rect x="1216.2" y="977" width="25.6" height="28"/>
<rect x="1247.3" y="977" width="1" height="28"/>
<rect x="1253.5" y="977" width="0.4" height="28"/>
<rect x="1260.1" y="977" width="0.4" height="28"/>
<rect x="1277.5" y="977" width="5.8" height="28"/>
<rect x="1287.4" y="977" width="2.5" height="28"/>
<rect x="1292.2" y="977" width="2.1" height="28"/>
<rect x="1297.6" y="977" width="0.4" height="28"/>
<rect x="1299.2" y="977" width="0.4" height="28"/>
<rect x="1311.1" y="977" width="1.1" height="28"/>
<rect x="1331.3" y="977" width="0.4" height="28"/>
<rect x="1418.4" y="977" width="0.5" height="28"/>
<rect x="1421.4" y="977" width="1.4" height="28"/>
<rect x="1216.2" y="1007" width="25.6" height="28"/>
<rect x="1245.9" y="1007" width="2.3" height="28"/>
<rect x="1250.7" y="1007" width="0.3" height="28"/>
<rect x="1253.1" y="1007" width="0.8" height="28"/>
<rect x="1259.2" y="1007" width="1" height="28"/>
<rect x="1277.5" y="1007" width="5.8" height="28"/>
<rect x="1287.4" y="1007" width="6.9" height="28"/>
<rect x="1297.3" y="1007" width="2.5" height="28"/>
<rect x="1311.1" y="1007" width="1.1" height="28"/>
<rect x="1321.8" y="1007" width="0.8" height="28"/>
<rect x="1328.5" y="1007" width="0.4" height="28"/>
<rect x="1330.3" y="1007" width="1.4" height="28"/>
<rect x="1371.2" y="1007" width="12.4" height="28"/>
<rect x="1386.6" y="1007" width="11.8" height="28"/>
<rect x="1418.2" y="1007" width="4.5" height="28"/>
<rect x="1425.1" y="1007" width="0.8" height="28"/>
<rect x="1440.1" y="1007" width="0.5" height="28"/>
<rect x="1216.2" y="1037" width="25.6" height="28"/>
<rect x="1245.9" y="1037" width="2.3" height="28"/>
<rect x="1250.6" y="1037" width="2.7" height="28"/>
<rect x="1259.2" y="1037" width="1" height="28"/>
<rect x="1266.7" y="1037" width="0.3" height="28"/>
<rect x="1268.3" y="1037" width="0.3" height="28"/>
<rect x="1277.5" y="1037" width="5.8" height="28"/>
<rect x="1287.4" y="1037" width="6.9" height="28"/>
<rect x="1297.3" y="1037" width="7.7" height="28"/>
<rect x="1307.8" y="1037" width="1" height="28"/>
<rect x="1311.1" y="1037" width="1.1" height="28"/>
<rect x="1321.8" y="1037" width="0.8" height="28"/>
<rect x="1324.2" y="1037" width="1" height="28"/>
<rect x="1328.4" y="1037" width="2.3" height="28"/>
<rect x="1333.5" y="1037" width="2.3" height="28"/>
<rect x="1339.4" y="1037" width="7.1" height="28"/>
<rect x="1371" y="1037" width="27.5" height="28"/>
<rect x="1418.2" y="1037" width="4.5" height="28"/>
<rect x="1425.1" y="1037" width="3.8" height="28"/>
<rect x="1431.8" y="1037" width="0.5" height="28"/>
<rect x="1443.5" y="1037" width="0.4" height="28"/>
<rect x="1446.1" y="1037" width="1" height="28"/>
<rect x="1449.6" y="1037" width="1.4" height="28"/>
<rect x="1475" y="1037" width="1" height="28"/>
<rect x="1478.2" y="1037" width="1" height="28"/>
<rect x="1493.5" y="1037" width="1.4" height="28"/>
<rect x="1498.4" y="1037" width="1.6" height="28"/>
<rect x="1216" y="1067" width="26.1" height="28"/>
<rect x="1245.9" y="1067" width="7.8" height="28"/>
<rect x="1256.6" y="1067" width="0.7" height="28"/>
<rect x="1258.7" y="1067" width="1.1" height="28"/>
<rect x="1263" y="1067" width="0.8" height="28"/>
<rect x="1267.1" y="1067" width="1.9" height="28"/>
<rect x="1277.5" y="1067" width="5.8" height="28"/>
<rect x="1287.4" y="1067" width="17.6" height="28"/>
<rect x="1307.8" y="1067" width="4.1" height="28"/>
<rect x="1314.6" y="1067" width="4.4" height="28"/>
<rect x="1321.8" y="1067" width="3.8" height="28"/>
<rect x="1328.4" y="1067" width="7.8" height="28"/>
<rect x="1349.3" y="1067" width="17.9" height="28"/>
<rect x="1371" y="1067" width="27.5" height="28"/>
<rect x="1401.8" y="1067" width="0.8" height="28"/>
<rect x="1413.8" y="1067" width="1.4" height="28"/>
<rect x="1418.2" y="1067" width="10.7" height="28"/>
<rect x="1432" y="1067" width="1.4" height="28"/>
<rect x="1436.5" y="1067" width="1.8" height="28"/>
<rect x="1440.6" y="1067" width="2.7" height="28"/>
<rect x="1446.6" y="1067" width="4.4" height="28"/>
<rect x="1475" y="1067" width="4.1" height="28"/>
<rect x="1482" y="1067" width="0.4" height="28"/>
<rect x="1485.6" y="1067" width="0.8" height="28"/>
<rect x="1489.4" y="1067" width="1.1" height="28"/>
<rect x="1493.3" y="1067" width="1.6" height="28"/>
<rect x="1498.4" y="1067" width="1.6" height="28"/>
<rect x="1215.7" y="1097" width="26.7" height="28"/>
<rect x="1245.9" y="1097" width="7.8" height="28"/>
<rect x="1256.5" y="1097" width="7.3" height="28"/>
<rect x="1267.1" y="1097" width="7.3" height="28"/>
<rect x="1277.1" y="1097" width="6.5" height="28"/>
<rect x="1287.4" y="1097" width="17.6" height="28"/>
<rect x="1307.8" y="1097" width="17.9" height="28"/>
<rect x="1328.4" y="1097" width="18.1" height="28"/>
<rect x="1349.3" y="1097" width="17.9" height="28"/>
<rect x="1370.7" y="1097" width="28" height="28"/>
<rect x="1401.8" y="1097" width="0.8" height="28"/>
<rect x="1405.3" y="1097" width="1" height="28"/>
<rect x="1409.4" y="1097" width="1" height="28"/>
<rect x="1413.2" y="1097" width="2.1" height="28"/>
<rect x="1418" y="1097" width="11" height="28"/>
<rect x="1432" y="1097" width="11.4" height="28"/>
<rect x="1446.6" y="1097" width="11" height="28"/>
<rect x="1475" y="1097" width="4.1" height="28"/>
<rect x="1482.3" y="1097" width="4.4" height="28"/>
<rect x="1489.4" y="1097" width="5.5" height="28"/>
<rect x="1497.9" y="1097" width="2.1" height="28"/>
<rect x="1195.1" y="1127" width="47.3" height="28"/>
<rect x="1245.6" y="1127" width="18.1" height="28"/>
<rect x="1266.8" y="1127" width="16.8" height="28"/>
<rect x="1287.1" y="1127" width="38.5" height="28"/>
<rect x="1328.4" y="1127" width="39" height="28"/>
<rect x="1370.7" y="1127" width="28" height="28"/>
<rect x="1401.8" y="1127" width="4.5" height="28"/>
<rect x="1409.4" y="1127" width="5.8" height="28"/>
<rect x="1418" y="1127" width="25.4" height="28"/>
<rect x="1446.6" y="1127" width="25.3" height="28"/>
<rect x="1474.6" y="1127" width="12.1" height="28"/>
<rect x="1489.4" y="1127" width="10.6" height="28"/>
<rect x="1154.4" y="1157" width="87.9" height="28"/>
<rect x="1245.6" y="1157" width="38.3" height="28"/>
<rect x="1286.3" y="1157" width="81.1" height="28"/>
<rect x="1370.7" y="1157" width="28" height="28"/>
<rect x="1401.8" y="1157" width="13.5" height="28"/>
<rect x="1418" y="1157" width="53.9" height="28"/>
<rect x="1461.1" y="1157" width="10.6" height="28"/>
<rect x="1461.1" y="1127" width="10.6" height="28"/>
<rect x="1461.1" y="1097" width="10.6" height="28"/>
<rect x="1461.1" y="1067" width="10.6" height="28"/>
<rect x="1461.1" y="1037" width="10.6" height="28"/>
<rect x="1461.1" y="1007" width="10.6" height="28"/>
<rect x="1461.1" y="977" width="10.6" height="28"/>
<rect x="1461.1" y="947" width="10.6" height="28"/>
<rect x="1461.1" y="917" width="10.6" height="28"/>
<rect x="1506.7" y="1007" width="64.3" height="28"/>
<rect x="1506.7" y="977" width="64.3" height="28"/>
<rect x="1506.7" y="947" width="64.3" height="28"/>
<rect x="1506.7" y="917" width="64.3" height="28"/>
<rect x="1506.7" y="887" width="64.3" height="28"/>
<rect x="1506.7" y="857" width="64.3" height="28"/>
<rect x="1507" y="827" width="31.6" height="28"/>
<rect x="1540.8" y="827" width="30.2" height="28"/>
<rect x="1506.4" y="1037" width="64.6" height="28"/>
<rect x="1506" y="1067" width="65" height="28"/>
<rect x="1505.3" y="1127" width="65.7" height="28"/>
<rect x="1505.3" y="1097" width="65.7" height="28"/>
<rect x="1504.7" y="1157" width="66.9" height="28"/>
<rect x="1623.4" y="1007" width="1.2" height="28"/>
<rect x="1623.4" y="977" width="1.2" height="28"/>
<rect x="1623.4" y="947" width="1.2" height="28"/>
<rect x="1623.4" y="917" width="1.2" height="28"/>
<rect x="1623.4" y="887" width="1.2" height="28"/>
<rect x="1623.4" y="857" width="1.2" height="28"/>
<rect x="1623.4" y="827" width="1.2" height="28"/>
<rect x="1623.4" y="797" width="1.2" height="28"/>
<rect x="1632.9" y="1037" width="2.3" height="28"/>
<rect x="1632.9" y="1007" width="2.3" height="28"/>
<rect x="1632.9" y="977" width="2.3" height="28"/>
<rect x="1632.9" y="947" width="2.3" height="28"/>
<rect x="1632.9" y="917" width="2.3" height="28"/>
<rect x="1632.9" y="887" width="2.3" height="28"/>
<rect x="1632.9" y="857" width="2.3" height="28"/>
<rect x="1632.9" y="827" width="2.3" height="28"/>
<rect x="1632.9" y="797" width="2.3" height="28"/>
<rect x="1648.4" y="1037" width="0.7" height="28"/>
<rect x="1648.4" y="1007" width="0.7" height="28"/>
<rect x="1648.4" y="977" width="0.7" height="28"/>
<rect x="1648.4" y="947" width="0.7" height="28"/>
<rect x="1648.4" y="917" width="0.7" height="28"/>
<rect x="1648.4" y="887" width="0.7" height="28"/>
<rect x="1648.4" y="857" width="0.7" height="28"/>
<rect x="1648.4" y="827" width="0.7" height="28"/>
<rect x="1648.4" y="797" width="0.7" height="28"/>
<rect x="1652.1" y="1067" width="6" height="28"/>
<rect x="1652.1" y="1037" width="6" height="28"/>
<rect x="1652.1" y="1007" width="6" height="28"/>
<rect x="1652.1" y="977" width="6" height="28"/>
<rect x="1652.1" y="947" width="6" height="28"/>
<rect x="1652.1" y="917" width="6" height="28"/>
<rect x="1661" y="1067" width="12.4" height="28"/>
<rect x="1661" y="1037" width="12.4" height="28"/>
<rect x="1661" y="1007" width="12.4" height="28"/>
<rect x="1661" y="977" width="12.4" height="28"/>
<rect x="1661" y="947" width="12.4" height="28"/>
<rect x="1661" y="917" width="12.4" height="28"/>
<rect x="1661" y="887" width="12.4" height="28"/>
<rect x="1661" y="857" width="12.4" height="28"/>
<rect x="1661" y="827" width="12.4" height="28"/>
<rect x="1661" y="797" width="12.4" height="28"/>
<rect x="1597.1" y="1067" width="1.6" height="28"/>
<rect x="1597.1" y="1037" width="1.6" height="28"/>
<rect x="1597.1" y="1007" width="1.6" height="28"/>
<rect x="1597.1" y="977" width="1.6" height="28"/>
<rect x="1597.1" y="947" width="1.6" height="28"/>
<rect x="1602.2" y="1037" width="5.9" height="28"/>
<rect x="1602.2" y="1007" width="5.9" height="28"/>
<rect x="1602.2" y="977" width="5.9" height="28"/>
<rect x="1602.2" y="947" width="5.9" height="28"/>
<rect x="1586.3" y="1037" width="0.5" height="28"/>
<rect x="1586.3" y="1007" width="0.5" height="28"/>
<rect x="1586.3" y="977" width="0.5" height="28"/>
<rect x="1586.3" y="947" width="0.5" height="28"/>
<rect x="1612.3" y="947" width="1.1" height="28"/>
<rect x="1574.2" y="977" width="0.3" height="28"/>
<rect x="1612.3" y="977" width="1.1" height="28"/>
<rect x="1616" y="977" width="1" height="28"/>
<rect x="1574.7" y="1007" width="1.8" height="28"/>
<rect x="1580.4" y="1007" width="0.4" height="28"/>
<rect x="1612.3" y="1007" width="4.7" height="28"/>
<rect x="1619.7" y="1007" width="1.1" height="28"/>
<rect x="1638.1" y="1007" width="0.4" height="28"/>
<rect x="1474.4" y="1037" width="1.4" height="28"/>
<rect x="1477.9" y="1037" width="1.6" height="28"/>
<rect x="1484.2" y="1037" width="0.4" height="28"/>
<rect x="1493.7" y="1037" width="1" height="28"/>
<rect x="1497.1" y="1037" width="4.8" height="28"/>
<rect x="1574.7" y="1037" width="1.8" height="28"/>
<rect x="1578.9" y="1037" width="1.8" height="28"/>
<rect x="1592.3" y="1037" width="0.3" height="28"/>
<rect x="1612.3" y="1037" width="4.7" height="28"/>
<rect x="1619.7" y="1037" width="3.6" height="28"/>
<rect x="1627.5" y="1037" width="0.5" height="28"/>
<rect x="1629.2" y="1037" width="0.5" height="28"/>
<rect x="1637.7" y="1037" width="0.8" height="28"/>
<rect x="1640" y="1037" width="0.8" height="28"/>
<rect x="1644.1" y="1037" width="1.4" height="28"/>
<rect x="1474.4" y="1067" width="5.5" height="28"/>
<rect x="1482.1" y="1067" width="0.4" height="28"/>
<rect x="1484.5" y="1067" width="2.3" height="28"/>
<rect x="1489.1" y="1067" width="1.4" height="28"/>
<rect x="1493.4" y="1067" width="1.2" height="28"/>
<rect x="1497.1" y="1067" width="4.8" height="28"/>
<rect x="1574.7" y="1067" width="6.2" height="28"/>
<rect x="1583" y="1067" width="0.7" height="28"/>
<rect x="1585.2" y="1067" width="0.5" height="28"/>
<rect x="1587.3" y="1067" width="0.4" height="28"/>
<rect x="1588.9" y="1067" width="0.8" height="28"/>
<rect x="1592.2" y="1067" width="2.5" height="28"/>
<rect x="1601.5" y="1067" width="6.6" height="28"/>
<rect x="1611.8" y="1067" width="12.8" height="28"/>
<rect x="1627.7" y="1067" width="2.2" height="28"/>
<rect x="1632.5" y="1067" width="2.7" height="28"/>
<rect x="1638" y="1067" width="3.2" height="28"/>
<rect x="1644.1" y="1067" width="4.9" height="28"/>
<rect x="1474.4" y="1097" width="5.5" height="28"/>
<rect x="1482.3" y="1097" width="4.5" height="28"/>
<rect x="1489.1" y="1097" width="5.5" height="28"/>
<rect x="1497.1" y="1097" width="4.8" height="28"/>
<rect x="1574.3" y="1097" width="6.3" height="28"/>
<rect x="1583" y="1097" width="6.9" height="28"/>
<rect x="1592.2" y="1097" width="6.6" height="28"/>
<rect x="1601.5" y="1097" width="6.6" height="28"/>
<rect x="1611.4" y="1097" width="13.2" height="28"/>
<rect x="1627.4" y="1097" width="13.7" height="28"/>
<rect x="1643.9" y="1097" width="14" height="28"/>
<rect x="1660.4" y="1097" width="13.1" height="28"/>
<rect x="1474.4" y="1127" width="12.4" height="28"/>
<rect x="1489.1" y="1127" width="12.8" height="28"/>
<rect x="1574.3" y="1127" width="15.5" height="28"/>
<rect x="1592.2" y="1127" width="15.9" height="28"/>
<rect x="1611.4" y="1127" width="29.7" height="28"/>
<rect x="1643.9" y="1127" width="29.5" height="28"/>
<rect x="1474.4" y="1157" width="27.5" height="28"/>
<rect x="1574.3" y="1157" width="33.8" height="28"/>
<rect x="1611.2" y="1157" width="62.5" height="28"/>
<rect x="1736.2" y="1157" width="1.4" height="28"/>
<rect x="1741" y="1157" width="7.8" height="28"/>
<rect x="1751.1" y="1157" width="3.7" height="28"/>
<rect x="1760.9" y="1157" width="7.3" height="28"/>
<rect x="1729.3" y="1127" width="1.1" height="28"/>
<rect x="2739.5" y="1187" width="81.5" height="28"/>
<rect x="1979.2" y="1127" width="201.2" height="28"/>
<rect x="2027.4" y="1097" width="152.9" height="28"/>
<rect x="2027.4" y="1067" width="3.6" height="28"/>
<rect x="2033.7" y="1067" width="2.3" height="28"/>
<rect x="2038.4" y="1067" width="43.7" height="28"/>
<rect x="2084.5" y="1067" width="21.6" height="28"/>
<rect x="2108.5" y="1067" width="71.9" height="28"/>
<rect x="2027.5" y="1037" width="0.8" height="28"/>
<rect x="2033.7" y="1037" width="2.3" height="28"/>
<rect x="2038.8" y="1037" width="19.2" height="28"/>
<rect x="2060.8" y="1037" width="21.3" height="28"/>
<rect x="2084.8" y="1037" width="8.9" height="28"/>
<rect x="2096.1" y="1037" width="9.8" height="28"/>
<rect x="2108.9" y="1037" width="29.5" height="28"/>
<rect x="2140.9" y="1037" width="39.2" height="28"/>
<rect x="2027.5" y="1007" width="0.5" height="28"/>
<rect x="2034.2" y="1007" width="1.8" height="28"/>
<rect x="2039.2" y="1007" width="7.6" height="28"/>
<rect x="2049.4" y="1007" width="8.5" height="28"/>
<rect x="2060.9" y="1007" width="9.5" height="28"/>
<rect x="2073.3" y="1007" width="8.5" height="28"/>
<rect x="2085.1" y="1007" width="2.7" height="28"/>
<rect x="2090.3" y="1007" width="3.4" height="28"/>
<rect x="2096.5" y="1007" width="3.4" height="28"/>
<rect x="2102.7" y="1007" width="3.2" height="28"/>
<rect x="2109.3" y="1007" width="13.3" height="28"/>
<rect x="2125.4" y="1007" width="12.8" height="28"/>
<rect x="2141.2" y="1007" width="13.1" height="28"/>
<rect x="2157.4" y="1007" width="22.7" height="28"/>
<rect x="2034.2" y="977" width="1.8" height="28"/>
<rect x="2039.2" y="977" width="7.6" height="28"/>
<rect x="2049.4" y="977" width="1.1" height="28"/>
<rect x="2053.2" y="977" width="1.6" height="28"/>
<rect x="2057.1" y="977" width="0.8" height="28"/>
<rect x="2061.2" y="977" width="3" height="28"/>
<rect x="2067" y="977" width="3.4" height="28"/>
<rect x="2073.3" y="977" width="8.5" height="28"/>
<rect x="2085.1" y="977" width="2.7" height="28"/>
<rect x="2096.2" y="977" width="0.5" height="28"/>
<rect x="2099.2" y="977" width="0.7" height="28"/>
<rect x="2102.7" y="977" width="3.2" height="28"/>
<rect x="2109.3" y="977" width="13.3" height="28"/>
<rect x="2125.4" y="977" width="2.5" height="28"/>
<rect x="2130.2" y="977" width="2.7" height="28"/>
<rect x="2135.4" y="977" width="2.3" height="28"/>
<rect x="2141.2" y="977" width="4.8" height="28"/>
<rect x="2149.1" y="977" width="5.1" height="28"/>
<rect x="2157.4" y="977" width="22.7" height="28"/>
<rect x="2039.2" y="947" width="2.7" height="28"/>
<rect x="2044.3" y="947" width="2.5" height="28"/>
<rect x="2053.2" y="947" width="1.6" height="28"/>
<rect x="2060.6" y="947" width="0.5" height="28"/>
<rect x="2063.5" y="947" width="1.1" height="28"/>
<rect x="2067.2" y="947" width="3.2" height="28"/>
<rect x="2073.3" y="947" width="8.5" height="28"/>
<rect x="2085.2" y="947" width="0.4" height="28"/>
<rect x="2087" y="947" width="0.8" height="28"/>
<rect x="2099.2" y="947" width="0.7" height="28"/>
<rect x="2102.7" y="947" width="3.2" height="28"/>
<rect x="2109.3" y="947" width="5.5" height="28"/>
<rect x="2117.5" y="947" width="5.1" height="28"/>
<rect x="2125.5" y="947" width="0.4" height="28"/>
<rect x="2127.6" y="947" width="0.4" height="28"/>
<rect x="2130.2" y="947" width="2.7" height="28"/>
<rect x="2135.1" y="947" width="0.4" height="28"/>
<rect x="2137.9" y="947" width="0.4" height="28"/>
<rect x="2141.2" y="947" width="1.1" height="28"/>
<rect x="2145" y="947" width="1" height="28"/>
<rect x="2149.1" y="947" width="5.1" height="28"/>
<rect x="2157.4" y="947" width="22.7" height="28"/>
<rect x="2039.2" y="917" width="2.7" height="28"/>
<rect x="2044.4" y="917" width="0.4" height="28"/>
<rect x="2046.1" y="917" width="0.7" height="28"/>
<rect x="2053.2" y="917" width="1.6" height="28"/>
<rect x="2063.7" y="917" width="0.4" height="28"/>
<rect x="2067.2" y="917" width="3.2" height="28"/>
<rect x="2073.3" y="917" width="8.5" height="28"/>
<rect x="2085.2" y="917" width="0.4" height="28"/>
<rect x="2099.2" y="917" width="0.7" height="28"/>
<rect x="2102.7" y="917" width="3.2" height="28"/>
<rect x="2109.3" y="917" width="5.5" height="28"/>
<rect x="2117.5" y="917" width="1.1" height="28"/>
<rect x="2121.2" y="917" width="1.4" height="28"/>
<rect x="2127.6" y="917" width="0.4" height="28"/>
<rect x="2130.2" y="917" width="2.7" height="28"/>
<rect x="2135.1" y="917" width="0.4" height="28"/>
<rect x="2145" y="917" width="1" height="28"/>
<rect x="2149.1" y="917" width="5.1" height="28"/>
<rect x="2157.4" y="917" width="22.7" height="28"/>
<rect x="2039.3" y="887" width="0.4" height="28"/>
<rect x="2041.3" y="887" width="0.3" height="28"/>
<rect x="2046.1" y="887" width="0.7" height="28"/>
<rect x="2053.2" y="887" width="1.6" height="28"/>
<rect x="2063.7" y="887" width="0.4" height="28"/>
<rect x="2067.2" y="887" width="3.2" height="28"/>
<rect x="2073.3" y="887" width="8.5" height="28"/>
<rect x="2099.2" y="887" width="0.7" height="28"/>
<rect x="2102.7" y="887" width="3.2" height="28"/>
<rect x="2039.3" y="857" width="0.4" height="28"/>
<rect x="2046.1" y="857" width="0.7" height="28"/>
<rect x="2053.2" y="857" width="1.6" height="28"/>
<rect x="2063.7" y="857" width="0.4" height="28"/>
<rect x="2067.2" y="857" width="3.2" height="28"/>
<rect x="2073.3" y="857" width="8.5" height="28"/>
<rect x="2183.1" y="1157" width="1" height="28"/>
<rect x="2188.6" y="1157" width="7.6" height="28"/>
<rect x="2198.6" y="1157" width="18.1" height="28"/>
<rect x="2220.5" y="1157" width="0.7" height="28"/>
<rect x="2379.3" y="1127" width="0.7" height="28"/>
<rect x="2497.9" y="1127" width="163.2" height="28"/>
<rect x="2520.5" y="1097" width="140.3" height="28"/>
<rect x="2520.5" y="1067" width="2.7" height="28"/>
<rect x="2526" y="1067" width="2.5" height="28"/>
<rect x="2531" y="1067" width="41.2" height="28"/>
<rect x="2574.1" y="1067" width="21.4" height="28"/>
<rect x="2597.9" y="1067" width="62.9" height="28"/>
<rect x="2520" y="1037" width="0.5" height="28"/>
<rect x="2526" y="1037" width="2.5" height="28"/>
<rect x="2531" y="1037" width="19.2" height="28"/>
<rect x="2552.1" y="1037" width="20.1" height="28"/>
<rect x="2574.1" y="1037" width="9.1" height="28"/>
<rect x="2585.1" y="1037" width="10.4" height="28"/>
<rect x="2597.9" y="1037" width="30" height="28"/>
<rect x="2629.9" y="1037" width="30.9" height="28"/>
<rect x="2526" y="1007" width="2.2" height="28"/>
<rect x="2531.2" y="1007" width="7.6" height="28"/>
<rect x="2541.1" y="1007" width="8.7" height="28"/>
<rect x="2552.1" y="1007" width="8.7" height="28"/>
<rect x="2563.1" y="1007" width="8.7" height="28"/>
<rect x="2574.5" y="1007" width="3.2" height="28"/>
<rect x="2580" y="1007" width="2.7" height="28"/>
<rect x="2585.5" y="1007" width="4" height="28"/>
<rect x="2592" y="1007" width="3.2" height="28"/>
<rect x="2598.3" y="1007" width="12.9" height="28"/>
<rect x="2614" y="1007" width="13.7" height="28"/>
<rect x="2630.2" y="1007" width="13.7" height="28"/>
<rect x="2646.4" y="1007" width="14.4" height="28"/>
<rect x="2526" y="977" width="2.2" height="28"/>
<rect x="2531.2" y="977" width="7.6" height="28"/>
<rect x="2541.1" y="977" width="1.1" height="28"/>
<rect x="2545" y="977" width="1.1" height="28"/>
<rect x="2548.8" y="977" width="1" height="28"/>
<rect x="2552.5" y="977" width="2.7" height="28"/>
<rect x="2558" y="977" width="2.7" height="28"/>
<rect x="2563.5" y="977" width="8.2" height="28"/>
<rect x="2574.5" y="977" width="3.2" height="28"/>
<rect x="2585.2" y="977" width="0.5" height="28"/>
<rect x="2587" y="977" width="0.4" height="28"/>
<rect x="2588.7" y="977" width="0.8" height="28"/>
<rect x="2592" y="977" width="3.2" height="28"/>
<rect x="2598.6" y="977" width="12.6" height="28"/>
<rect x="2614" y="977" width="2.5" height="28"/>
<rect x="2619.2" y="977" width="3.4" height="28"/>
<rect x="2625.4" y="977" width="1.8" height="28"/>
<rect x="2630.4" y="977" width="5.2" height="28"/>
<rect x="2638.1" y="977" width="5.8" height="28"/>
<rect x="2646.9" y="977" width="13.9" height="28"/>
<rect x="2531.2" y="947" width="2.7" height="28"/>
<rect x="2536" y="947" width="2.7" height="28"/>
<rect x="2545" y="947" width="1.1" height="28"/>
<rect x="2552.3" y="947" width="0.5" height="28"/>
<rect x="2554.9" y="947" width="0.7" height="28"/>
<rect x="2558" y="947" width="2.7" height="28"/>
<rect x="2563.5" y="947" width="8.2" height="28"/>
<rect x="2574.1" y="947" width="0.8" height="28"/>
<rect x="2577.4" y="947" width="0.4" height="28"/>
<rect x="2588.7" y="947" width="0.8" height="28"/>
<rect x="2592" y="947" width="3.2" height="28"/>
<rect x="2598.6" y="947" width="5.2" height="28"/>
<rect x="2606.1" y="947" width="5.1" height="28"/>
<rect x="2613.8" y="947" width="0.4" height="28"/>
<rect x="2616.3" y="947" width="0.4" height="28"/>
<rect x="2619.2" y="947" width="3.4" height="28"/>
<rect x="2625.1" y="947" width="0.5" height="28"/>
<rect x="2626.9" y="947" width="0.4" height="28"/>
<rect x="2630.4" y="947" width="1.1" height="28"/>
<rect x="2634" y="947" width="1.1" height="28"/>
<rect x="2638.1" y="947" width="5.8" height="28"/>
<rect x="2646.9" y="947" width="13.9" height="28"/>
<rect x="2531.2" y="917" width="2.7" height="28"/>
<rect x="2536.2" y="917" width="0.4" height="28"/>
<rect x="2538.1" y="917" width="0.7" height="28"/>
<rect x="2545" y="917" width="1.1" height="28"/>
<rect x="2555" y="917" width="0.5" height="28"/>
<rect x="2558" y="917" width="2.7" height="28"/>
<rect x="2563.5" y="917" width="8.2" height="28"/>
<rect x="2574.1" y="917" width="0.8" height="28"/>
<rect x="2588.8" y="917" width="0.5" height="28"/>
<rect x="2592" y="917" width="3.2" height="28"/>
<rect x="2598.6" y="917" width="5.2" height="28"/>
<rect x="2606.1" y="917" width="1.4" height="28"/>
<rect x="2609.8" y="917" width="1.4" height="28"/>
<rect x="2616.3" y="917" width="0.4" height="28"/>
<rect x="2619.2" y="917" width="3.4" height="28"/>
<rect x="2625.1" y="917" width="0.5" height="28"/>
<rect x="2634" y="917" width="1.1" height="28"/>
<rect x="2638.1" y="917" width="5.8" height="28"/>
<rect x="2646.9" y="917" width="13.9" height="28"/>
<rect x="2531.4" y="887" width="0.4" height="28"/>
<rect x="2533.8" y="887" width="0.3" height="28"/>
<rect x="2538.2" y="887" width="0.4" height="28"/>
<rect x="2545" y="887" width="1.1" height="28"/>
<rect x="2558" y="887" width="2.7" height="28"/>
<rect x="2563.9" y="887" width="7.8" height="28"/>
<rect x="2588.8" y="887" width="0.5" height="28"/>
<rect x="2592" y="887" width="3.2" height="28"/>
<rect x="2531.4" y="857" width="0.4" height="28"/>
<rect x="2538.2" y="857" width="0.4" height="28"/>
<rect x="2545" y="857" width="1.1" height="28"/>
<rect x="2558" y="857" width="2.7" height="28"/>
<rect x="2563.9" y="857" width="7.8" height="28"/>
<rect x="2664.2" y="1157" width="0.5" height="28"/>
<rect x="2739" y="1157" width="2.7" height="28"/>
<rect x="2744" y="1157" width="2.7" height="28"/>
<rect x="2749" y="1157" width="41" height="28"/>
<rect x="2792" y="1157" width="28.9" height="28"/>
<rect x="2738.6" y="1127" width="0.3" height="28"/>
<rect x="2744.2" y="1127" width="2.5" height="28"/>
<rect x="2749" y="1127" width="19" height="28"/>
<rect x="2770.1" y="1127" width="19.9" height="28"/>
<rect x="2792.3" y="1127" width="18.6" height="28"/>
<rect x="2812.9" y="1127" width="8" height="28"/>
<rect x="2744.2" y="1097" width="2.5" height="28"/>
<rect x="2749" y="1097" width="8.2" height="28"/>
<rect x="2759.6" y="1097" width="8.4" height="28"/>
<rect x="2770.1" y="1097" width="8.9" height="28"/>
<rect x="2781.1" y="1097" width="8.9" height="28"/>
<rect x="2792.3" y="1097" width="8.5" height="28"/>
<rect x="2803" y="1097" width="7.8" height="28"/>
<rect x="2812.9" y="1097" width="8" height="28"/>
<rect x="2744.2" y="1067" width="2.5" height="28"/>
<rect x="2749" y="1067" width="8.2" height="28"/>
<rect x="2759.6" y="1067" width="0.8" height="28"/>
<rect x="2761.8" y="1067" width="1.6" height="28"/>
<rect x="2765.5" y="1067" width="0.4" height="28"/>
<rect x="2770.1" y="1067" width="3" height="28"/>
<rect x="2775.6" y="1067" width="3.4" height="28"/>
<rect x="2781.1" y="1067" width="8.9" height="28"/>
<rect x="2792.3" y="1067" width="8.5" height="28"/>
<rect x="2803" y="1067" width="0.7" height="28"/>
<rect x="2805.8" y="1067" width="1.4" height="28"/>
<rect x="2809.1" y="1067" width="1.8" height="28"/>
<rect x="2812.9" y="1067" width="2.7" height="28"/>
<rect x="2818.2" y="1067" width="2.7" height="28"/>
<rect x="2749.4" y="1037" width="2.7" height="28"/>
<rect x="2754.5" y="1037" width="2.3" height="28"/>
<rect x="2763.2" y="1037" width="1.1" height="28"/>
<rect x="2770.1" y="1037" width="1.1" height="28"/>
<rect x="2773.1" y="1037" width="0.4" height="28"/>
<rect x="2776.1" y="1037" width="2.5" height="28"/>
<rect x="2781.6" y="1037" width="8.4" height="28"/>
<rect x="2793" y="1037" width="2.3" height="28"/>
<rect x="2798.5" y="1037" width="2.1" height="28"/>
<rect x="2806.1" y="1037" width="1.1" height="28"/>
<rect x="2813.3" y="1037" width="0.5" height="28"/>
<rect x="2815.5" y="1037" width="0.4" height="28"/>
<rect x="2818.4" y="1037" width="2.5" height="28"/>
<rect x="2749.4" y="1007" width="2.7" height="28"/>
<rect x="2754" y="1007" width="0.4" height="28"/>
<rect x="2756.7" y="1007" width="0.5" height="28"/>
<rect x="2763.2" y="1007" width="1" height="28"/>
<rect x="2773.2" y="1007" width="0.3" height="28"/>
<rect x="2776.1" y="1007" width="2.5" height="28"/>
<rect x="2782" y="1007" width="7.6" height="28"/>
<rect x="2793" y="1007" width="2.3" height="28"/>
<rect x="2797.7" y="1007" width="0.3" height="28"/>
<rect x="2806.1" y="1007" width="1.1" height="28"/>
<rect x="2813.1" y="1007" width="0.4" height="28"/>
<rect x="2818.4" y="1007" width="2.1" height="28"/>
<rect x="2749.6" y="977" width="0.3" height="28"/>
<rect x="2752.3" y="977" width="0.3" height="28"/>
<rect x="2756.7" y="977" width="0.5" height="28"/>
<rect x="2763.2" y="977" width="1" height="28"/>
<rect x="2776.1" y="977" width="2.5" height="28"/>
<rect x="2782" y="977" width="7.6" height="28"/>
<rect x="2793.1" y="977" width="0.4" height="28"/>
<rect x="2794.9" y="977" width="0.3" height="28"/>
<rect x="2806.1" y="977" width="1.1" height="28"/>
<rect x="2818.4" y="977" width="2.1" height="28"/>
<rect x="2757.4" y="947" width="0.3" height="28"/>
<rect x="2763.5" y="947" width="0.7" height="28"/>
<rect x="2776.1" y="947" width="2.5" height="28"/>
<rect x="2782" y="947" width="7.6" height="28"/>
</g>
<g fill="#88ae58">
<rect x="52" y="1247" width="2769" height="28"/>
<rect x="151" y="1157" width="13.3" height="28"/>
<rect x="486.8" y="1157" width="4.5" height="28"/>
<rect x="531.4" y="1157" width="15.3" height="28"/>
<rect x="593.1" y="1157" width="107" height="28"/>
<rect x="771.9" y="1157" width="107.3" height="28"/>
<rect x="712" y="1157" width="13.5" height="28"/>
<rect x="733.7" y="1157" width="2.2" height="28"/>
<rect x="743.3" y="1157" width="6.6" height="28"/>
<rect x="886.3" y="1157" width="1.7" height="28"/>
<rect x="1724.1" y="1157" width="5.9" height="28"/>
<rect x="1774" y="1157" width="157.1" height="28"/>
<rect x="1979.2" y="1157" width="201.2" height="28"/>
<rect x="2223.7" y="1157" width="144.4" height="28"/>
<rect x="2379.3" y="1157" width="0.7" height="28"/>
<rect x="2385.6" y="1157" width="87.2" height="28"/>
<rect x="2497.9" y="1157" width="163.2" height="28"/>
<rect x="2666.9" y="1157" width="69.1" height="28"/>
</g>
<g fill="#285663">
<rect x="67.2" y="1187" width="821.3" height="28"/>
<rect x="1676.5" y="1187" width="1059.5" height="28"/>
<rect x="1983" y="1097" width="41" height="28"/>
<rect x="2499.3" y="1097" width="17.8" height="28"/>
</g>
<g fill="#337986">
<rect x="158.8" y="1127" width="4.3" height="28"/>
<rect x="160.8" y="1097" width="1.4" height="28"/>
<rect x="719.2" y="1127" width="5.8" height="28"/>
<rect x="722" y="1097" width="2.5" height="28"/>
<rect x="734" y="1127" width="1.2" height="28"/>
<rect x="886.3" y="1127" width="1.5" height="28"/>
<rect x="2230.6" y="1127" width="137.3" height="28"/>
<rect x="2234.7" y="1097" width="132.6" height="28"/>
<rect x="2666.9" y="1127" width="68" height="28"/>
<rect x="2669.7" y="1097" width="65.7" height="28"/>
</g>
<g fill="#8a7590">
<rect x="512.9" y="1157" width="1.1" height="28"/>
</g>
<g fill="#51a16e">
<rect x="531.4" y="1127" width="15.3" height="28"/>
<rect x="745.2" y="1127" width="4.9" height="28"/>
<rect x="1774" y="1127" width="157.1" height="28"/>
<rect x="2385.6" y="1127" width="87.2" height="28"/>
</g>
<g fill="#5d4963">
<rect x="1757" y="1157" width="0.8" height="28"/>
</g>
<g fill="#cfdad6">
<rect x="2327.8" y="1067" width="2.1" height="28"/>
</g>
<g fill="#a8cfc6">
<rect x="2364.9" y="1067" width="1.4" height="28"/>
</g>
<g fill="#f88962">
<rect x="1625.8" y="797" width="2" height="28"/>
</g>
<g fill="#e8b39f">
<rect x="1626.2" y="827" width="1.2" height="118"/>
</g>
<g fill="#1f1f1f">
<rect x="40" y="1305.9" width="2800" height="2.2"/>
<rect x="2822.2" y="700" width="3" height="610"/>
<rect x="1074.9" y="945" width="1.2" height="31"/>
<rect x="903" y="915" width="1.2" height="61"/>
<rect x="909.8" y="855" width="1.2" height="151"/>
<rect x="928.7" y="885" width="1.2" height="91"/>
<rect x="935.2" y="795" width="1.2" height="31"/>
<rect x="962.4" y="945" width="1.2" height="31"/>
<rect x="1023.7" y="945" width="1.2" height="61"/>
<rect x="1074.8" y="945" width="1.2" height="31"/>
<rect x="1192" y="975" width="1.2" height="31"/>
<rect x="1255.2" y="855" width="1.2" height="61"/>
<rect x="1263.9" y="945" width="1.2" height="31"/>
<rect x="1192" y="975" width="1.2" height="31"/>
<rect x="1325.7" y="945" width="1.2" height="61"/>
<rect x="1407.2" y="945" width="1.2" height="61"/>
<rect x="1443.5" y="945" width="1.2" height="61"/>
<rect x="1403.9" y="915" width="1.2" height="31"/>
<rect x="1246" y="855" width="1.2" height="31"/>
<rect x="1612.3" y="795" width="1.2" height="31"/>
<rect x="1614.7" y="795" width="1.2" height="61"/>
<rect x="1618.8" y="795" width="1.2" height="31"/>
<rect x="1589.7" y="945" width="1.2" height="31"/>
<rect x="1640.8" y="945" width="1.2" height="61"/>
<rect x="2057.6" y="855" width="1.2" height="31"/>
<rect x="2549.6" y="855" width="1.2" height="31"/>
<rect x="2767.7" y="945" width="1.2" height="31"/>
<rect x="1306.9" y="885" width="1.2" height="61"/>
</g>
</svg>
<div class="abs leg mono" style="left:50px;width:133px;background:#88ae58">Code Unit</div>
<div class="abs leg mono" style="left:193px;width:120px;background:#51a16e">Workflow</div>
<div class="abs leg mono" style="left:323px;width:94px;background:#2b8f81">Method</div>
<div class="abs leg mono" style="left:427px;width:68px;background:#337986">Flow</div>
<div class="abs leg mono" style="left:505px;width:55px;background:#285663">DML</div>
<div class="abs leg mono" style="left:570px;width:68px;background:#5d4963">SOQL</div>
<div class="abs leg mono" style="left:648px;width:185px;background:#5c3444">System Method</div>
</body></html>
